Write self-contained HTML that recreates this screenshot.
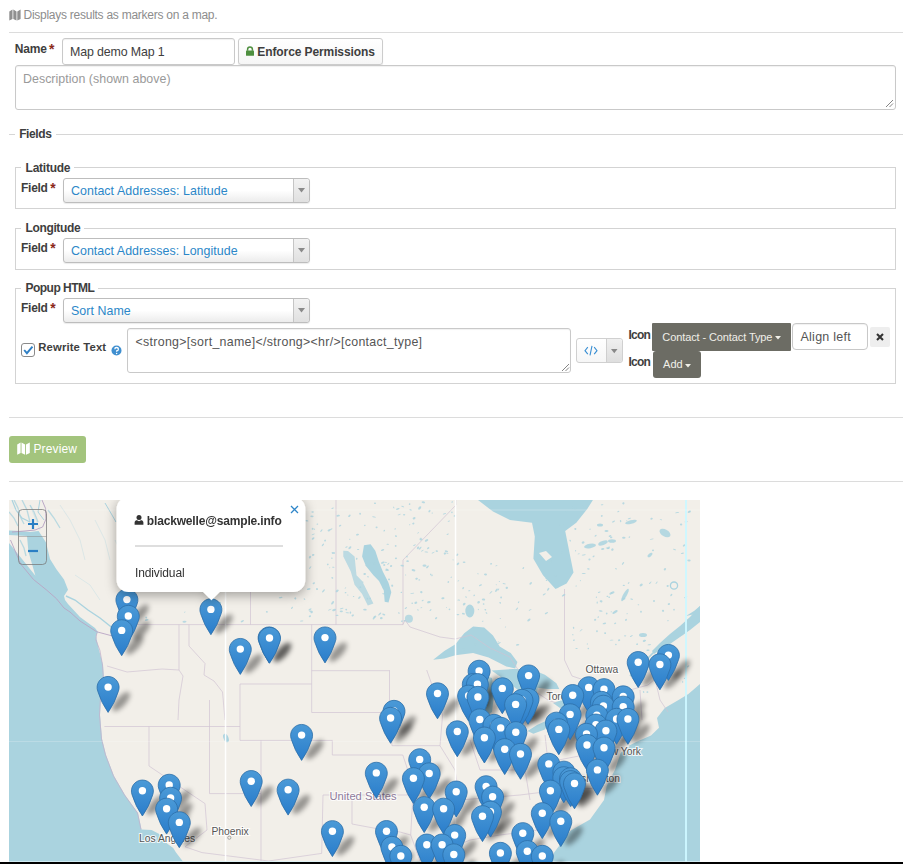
<!DOCTYPE html>
<html><head><meta charset="utf-8"><style>
html,body{margin:0;padding:0;background:#fff;width:903px;height:864px;overflow:hidden;position:relative}
body{font-family:"Liberation Sans", sans-serif}
.abs{position:absolute}
.t{position:absolute;white-space:pre;line-height:1;font-family:"Liberation Sans", sans-serif}
.hr{position:absolute;left:9px;width:894px;height:1px;background:#dcdcdc}
.line{position:absolute;height:1px;background:#d6d6d6}
.inp{position:absolute;border:1px solid #c9c9c9;border-radius:3px;background:#fff;box-shadow:inset 0 1px 1px rgba(0,0,0,0.06)}
.btn{position:absolute;border:1px solid #cccccc;border-radius:3px;background:linear-gradient(#ffffff,#f6f6f6);box-shadow:0 1px 1px rgba(0,0,0,0.1)}
.fs{position:absolute;border:1px solid #d3d3d3}
.sel{position:absolute;border:1px solid #bdbdbd;border-radius:3px;background:linear-gradient(#ffffff 50%,#ececec);box-shadow:0 1px 1px rgba(0,0,0,0.08)}
.arr{position:absolute;right:0;top:0;width:15px;height:23px;border-left:1px solid #c5c5c5;background:linear-gradient(#f2f2f2,#e0e0e0);border-radius:0 3px 3px 0}
.dbtn{position:absolute;background:#6c6c64;border-radius:2px}
</style></head><body>
<svg class="abs" style="left:9px;top:9px" width="12" height="12" viewBox="0 0 12 12"><path d="M0.3 2.4 L3.5 0.6 L3.5 9.9 L0.3 11.6 Z M4.3 0.6 L7.5 2.4 L7.5 11.6 L4.3 9.9 Z M8.3 2.4 L11.6 0.6 L11.6 9.9 L8.3 11.6 Z" fill="#8f8f8f"/></svg>
<div class="t" style="left:23.5px;top:9px;font-size:12px;font-weight:normal;color:#8d8d8d;letter-spacing:-0.260px;">Displays results as markers on a map.</div>
<div class="hr" style="top:32px"></div>
<div class="t" style="left:14.8px;top:43px;font-size:12px;font-weight:bold;color:#3e3e3e;letter-spacing:-0.222px;">Name</div>
<div class="t" style="left:49px;top:42px;font-size:14px;font-weight:bold;color:#8b2a1a;">*</div>
<div class="inp" style="left:62px;top:38px;width:171px;height:25px"></div>
<div class="t" style="left:70px;top:46px;font-size:12.4px;font-weight:normal;color:#3e3e3e;letter-spacing:-0.137px;">Map demo Map 1</div>
<div class="btn" style="left:238px;top:38px;width:143px;height:25px"></div>
<svg class="abs" style="left:245px;top:46px" width="10" height="10" viewBox="0 0 10 10"><path d="M2.6 4.8 V3.3 A2.4 2.4 0 0 1 7.4 3.3 V4.8" fill="none" stroke="#4e8f3f" stroke-width="1.5"/><rect x="1" y="4.6" width="8" height="5.2" rx="0.6" fill="#4e8f3f"/></svg>
<div class="t" style="left:257.3px;top:46px;font-size:12px;font-weight:bold;color:#3e3e3e;letter-spacing:-0.100px;">Enforce Permissions</div>
<div class="inp" style="left:15px;top:65px;width:879px;height:43px"></div>
<div class="t" style="left:23px;top:73px;font-size:12.4px;font-weight:normal;color:#9a9a9a;letter-spacing:0.036px;">Description (shown above)</div>
<svg class="abs" style="left:885px;top:99px" width="9" height="9" viewBox="0 0 9 9"><path d="M1 8 L8 1 M4.5 8 L8 4.5" stroke="#777" stroke-width="0.9"/></svg>
<div class="line" style="left:9px;top:134px;width:6px"></div>
<div class="line" style="left:56px;top:134px;width:847px"></div>
<div class="t" style="left:19.2px;top:128px;font-size:12px;font-weight:bold;color:#3e3e3e;letter-spacing:-0.398px;">Fields</div>
<div class="fs" style="left:15px;top:167px;width:879px;height:40px"></div><div class="abs" style="left:21px;top:165px;width:53px;height:5px;background:#fff"></div>
<div class="t" style="left:25.6px;top:162px;font-size:12px;font-weight:bold;color:#3e3e3e;letter-spacing:-0.259px;">Latitude</div>
<div class="t" style="left:21px;top:182px;font-size:12px;font-weight:bold;color:#3e3e3e;letter-spacing:-0.263px;">Field</div><div class="t" style="left:50.3px;top:181px;font-size:14px;font-weight:bold;color:#8b2a1a;">*</div>
<div class="sel" style="left:63px;top:178px;width:245px;height:23px"><div class="arr"></div></div><svg class="abs" style="left:298px;top:188px" width="7" height="5" viewBox="0 0 7 5"><path d="M0 0 H7 L3.5 4.5 Z" fill="#8a8a8a"/></svg><div class="t" style="left:71px;top:185px;font-size:12.4px;font-weight:normal;color:#2b87c8;letter-spacing:0.060px;">Contact Addresses: Latitude</div>
<div class="fs" style="left:15px;top:228px;width:879px;height:40px"></div><div class="abs" style="left:21px;top:226px;width:63px;height:5px;background:#fff"></div>
<div class="t" style="left:25.6px;top:222px;font-size:12px;font-weight:bold;color:#3e3e3e;letter-spacing:-0.376px;">Longitude</div>
<div class="t" style="left:21px;top:242px;font-size:12px;font-weight:bold;color:#3e3e3e;letter-spacing:-0.263px;">Field</div><div class="t" style="left:50.3px;top:241px;font-size:14px;font-weight:bold;color:#8b2a1a;">*</div>
<div class="sel" style="left:63px;top:238px;width:245px;height:23px"><div class="arr"></div></div><svg class="abs" style="left:298px;top:248px" width="7" height="5" viewBox="0 0 7 5"><path d="M0 0 H7 L3.5 4.5 Z" fill="#8a8a8a"/></svg><div class="t" style="left:71px;top:245px;font-size:12.4px;font-weight:normal;color:#2b87c8;letter-spacing:0.045px;">Contact Addresses: Longitude</div>
<div class="fs" style="left:15px;top:288px;width:879px;height:94px"></div><div class="abs" style="left:21px;top:286px;width:77px;height:5px;background:#fff"></div>
<div class="t" style="left:25.4px;top:282px;font-size:12px;font-weight:bold;color:#3e3e3e;letter-spacing:-0.498px;">Popup HTML</div>
<div class="t" style="left:21px;top:302px;font-size:12px;font-weight:bold;color:#3e3e3e;letter-spacing:-0.263px;">Field</div><div class="t" style="left:50.3px;top:301px;font-size:14px;font-weight:bold;color:#8b2a1a;">*</div>
<div class="sel" style="left:63px;top:298px;width:245px;height:23px"><div class="arr"></div></div><svg class="abs" style="left:298px;top:308px" width="7" height="5" viewBox="0 0 7 5"><path d="M0 0 H7 L3.5 4.5 Z" fill="#8a8a8a"/></svg><div class="t" style="left:71px;top:305px;font-size:12.4px;font-weight:normal;color:#2b87c8;letter-spacing:0.065px;">Sort Name</div>
<div class="abs" style="left:21px;top:343px;width:12px;height:12px;border:1px solid #8a8a8a;border-radius:3px;background:#fff"></div>
<svg class="abs" style="left:22px;top:344px" width="12" height="12" viewBox="0 0 12 12"><path d="M2.2 6 L4.9 9.2 L10.5 2.6" fill="none" stroke="#2f7fc4" stroke-width="1.9"/></svg>
<div class="t" style="left:38.3px;top:342px;font-size:11.3px;font-weight:bold;color:#3e3e3e;letter-spacing:0.130px;">Rewrite Text</div>
<svg class="abs" style="left:111px;top:345px" width="11" height="11" viewBox="0 0 11 11"><circle cx="5.5" cy="5.5" r="5" fill="#3f8fd0"/><path d="M3.8 4.2 A1.8 1.7 0 1 1 5.7 5.9 V6.8" fill="none" stroke="#fff" stroke-width="1.3"/><circle cx="5.6" cy="8.5" r="0.75" fill="#fff"/></svg>
<div class="inp" style="left:127px;top:328px;width:442px;height:43px"></div>
<div class="t" style="left:135.5px;top:336px;font-size:12.4px;font-weight:normal;color:#555;letter-spacing:0.299px;">&lt;strong&gt;[sort_name]&lt;/strong&gt;&lt;hr/&gt;[contact_type]</div>
<svg class="abs" style="left:561px;top:363px" width="9" height="9" viewBox="0 0 9 9"><path d="M1 8 L8 1 M4.5 8 L8 4.5" stroke="#777" stroke-width="0.9"/></svg>
<div class="btn" style="left:576px;top:338px;width:45px;height:23px;border-color:#d0d0d0;box-shadow:none"></div>
<div class="abs" style="left:606px;top:339px;width:15px;height:23px;border-left:1px solid #cfcfcf;background:linear-gradient(#f0f0f0,#dedede);border-radius:0 3px 3px 0"></div>
<svg class="abs" style="left:584px;top:345px" width="14" height="11" viewBox="0 0 14 11"><path d="M3.8 2.2 L1 5.7 L3.8 9.2 M10.2 2.2 L13 5.7 L10.2 9.2 M8 0.8 L6 10.4" fill="none" stroke="#3a8fd3" stroke-width="1.1"/></svg>
<svg class="abs" style="left:611px;top:349px" width="7" height="5" viewBox="0 0 7 5"><path d="M0 0 H6.5 L3.25 4.2 Z" fill="#888"/></svg>
<div class="t" style="left:628.5px;top:329px;font-size:12px;font-weight:bold;color:#3e3e3e;letter-spacing:-0.743px;">Icon</div>
<div class="t" style="left:628.5px;top:356px;font-size:12px;font-weight:bold;color:#3e3e3e;letter-spacing:-0.743px;">Icon</div>
<div class="dbtn" style="left:652px;top:323px;width:139px;height:28px;border-radius:1px"></div>
<div class="t" style="left:662.3px;top:332px;font-size:11px;font-weight:normal;color:#f0efe8;letter-spacing:-0.101px;">Contact - Contact Type</div>
<svg class="abs" style="left:775px;top:336px" width="6" height="4" viewBox="0 0 6 4"><path d="M0 0 H6 L3 3.5 Z" fill="#f0efe8"/></svg>
<div class="inp" style="left:792px;top:323px;width:74px;height:25px;border-color:#c8c8c8;border-radius:4px"></div>
<div class="t" style="left:800.5px;top:331px;font-size:12.5px;font-weight:normal;color:#555;letter-spacing:0.255px;">Align left</div>
<div class="abs" style="left:870px;top:327px;width:20px;height:20px;background:#eeeeee;border-radius:2px"></div>
<svg class="abs" style="left:876px;top:333px" width="8" height="8" viewBox="0 0 8 8"><path d="M1 1 L7 7 M7 1 L1 7" stroke="#333" stroke-width="2.1"/></svg>
<div class="dbtn" style="left:653px;top:351px;width:48px;height:27px;border-radius:3px"></div>
<div class="t" style="left:663px;top:359px;font-size:11px;font-weight:normal;color:#f0efe8;letter-spacing:0.041px;">Add</div>
<svg class="abs" style="left:685px;top:364px" width="6" height="4" viewBox="0 0 6 4"><path d="M0 0 H6 L3 3.5 Z" fill="#f0efe8"/></svg>
<div class="hr" style="top:417px"></div>
<div class="abs" style="left:9px;top:436px;width:77px;height:27px;background:#a3c47d;border-radius:3px"></div>
<svg class="abs" style="left:17px;top:442px" width="13" height="13" viewBox="0 0 13 13"><path d="M0.2 2.4 L3.6 0.5 L3.6 10.9 L0.2 12.7 Z M4.5 0.5 L8.1 2.4 L8.1 12.7 L4.5 10.9 Z M9 2.4 L12.8 0.5 L12.8 10.9 L9 12.7 Z" fill="#fff"/></svg>
<div class="t" style="left:33.4px;top:443px;font-size:12px;font-weight:normal;color:#fff;letter-spacing:0.145px;">Preview</div>
<div class="hr" style="top:481px"></div>
<svg class="abs" style="left:0;top:0" width="903" height="864" viewBox="0 0 903 864">
<defs>
<clipPath id="mapclip"><rect x="9" y="500" width="691" height="362"/></clipPath>
<linearGradient id="pg" x1="0" y1="0" x2="0" y2="1"><stop offset="0" stop-color="#4b9ad7"/><stop offset="1" stop-color="#2a7dcb"/></linearGradient>
<filter id="blur" x="-20%" y="-20%" width="140%" height="140%"><feGaussianBlur stdDeviation="2.6"/></filter>
<filter id="pshadow" x="-10%" y="-10%" width="120%" height="130%"><feDropShadow dx="0" dy="3" stdDeviation="6" flood-opacity="0.35"/></filter>
<g id="pin"><path d="M0,25.3 Q-6.8,15.8 -10.3,4.2 A11,11 0 1 1 10.3,4.2 Q6.8,15.8 0,25.3 Z" fill="url(#pg)" stroke="#2c6fa8" stroke-width="0.8" stroke-linejoin="round"/>
<circle cx="0" cy="0" r="3.7" fill="#fff"/></g>
</defs>
<g clip-path="url(#mapclip)">
<rect x="9" y="500" width="691" height="362" fill="#f2efe9"/>
<path d="M9.0,530.5 L20.0,531.0 L30.0,532.0 L38.6,531.0 L46.0,542.6 L50.0,559.0 L56.4,569.3 L64.0,579.5 L68.0,589.7 L64.0,596.0 L65.0,600.0 L68.0,604.0 L80.0,617.0 L95.0,628.0 L98.0,632.0 L96.0,636.0 L99.0,650.0 L103.0,665.0 L104.0,680.0 L101.0,697.0 L100.0,715.0 L102.0,739.0 L106.0,755.0 L114.0,776.0 L125.0,795.0 L138.0,813.0 L141.5,829.4 L151.6,830.0 L158.8,833.7 L167.4,843.8 L173.2,848.0 L176.0,852.4 L183.3,862.0 L9.0,862.0 Z" fill="#aad3df" />
<path d="M9.0,535.0 L27.0,536.0 L28.4,551.5 L35.4,575.7 L22.0,559.0 L9.0,543.0 Z" fill="#f2efe9" />
<path d="M66.0,596.0 L75.0,600.0 L88.0,610.0 L100.0,618.0 L110.0,626.0 L118.0,633.0" fill="none" stroke="#aad3df" stroke-width="1.4" />
<path d="M10.5,540.0 L20.7,564.0 L33.5,579.5 L46.2,589.7 L56.4,598.6 L64.0,608.0 L70.0,612.0 L80.0,621.0 L96.8,631.8 L111.8,635.8" fill="none" stroke="#b9a5c4" stroke-width="0.9" />
<path d="M96.8,632.8 L95.8,639.8 L99.8,650.0 L102.5,665.0 L103.5,680.0 L100.5,697.0 L99.5,715.0 L101.5,739.0 L105.5,755.0 L113.5,776.0 L124.5,795.0 L137.5,813.0 L141.0,829.4" fill="none" stroke="#c3b3cc" stroke-width="0.8" />
<path d="M12.0,532.0 L25.0,531.0 L35.0,530.0 L42.6,527.0 L46.0,519.0 L45.6,508.6 L42.0,500.0" fill="none" stroke="#bba8c6" stroke-width="1.0" />
<path d="M14.0,500.0 L18.0,508.0 L20.0,516.0 L24.0,524.0" fill="none" stroke="#aad3df" stroke-width="1.3" opacity="0.8"/>
<path d="M22.0,500.0 L27.0,510.0 L30.0,522.0" fill="none" stroke="#aad3df" stroke-width="1.3" opacity="0.8"/>
<path d="M30.0,505.0 L34.0,512.0 L38.0,522.0" fill="none" stroke="#aad3df" stroke-width="1.3" opacity="0.8"/>
<path d="M9.0,512.0 L14.0,518.0 L18.0,526.0" fill="none" stroke="#aad3df" stroke-width="1.3" opacity="0.8"/>
<path d="M48.0,510.0 L54.0,518.0 L60.0,528.0" fill="none" stroke="#aad3df" stroke-width="1.3" opacity="0.8"/>
<path d="M20.0,540.0 L24.0,548.0 L26.0,556.0" fill="none" stroke="#aad3df" stroke-width="1.3" opacity="0.8"/>
<path d="M12.0,500.0 L16.0,510.0 L22.0,518.0 L30.0,522.0" fill="none" stroke="#aad3df" stroke-width="1.2" />
<path d="M40.0,500.0 L38.0,512.0 L44.0,520.0" fill="none" stroke="#aad3df" stroke-width="1" />
<path d="M105.0,503.0 L112.0,515.0 L116.0,522.0" fill="none" stroke="#aad3df" stroke-width="1" />
<path d="M478.0,500.0 L493.0,511.6 L510.0,520.0 L532.0,522.7 L534.8,536.5 L533.4,558.7 L543.0,575.3 L555.5,589.0 L566.6,583.6 L573.5,572.5 L570.7,558.7 L565.2,531.0 L576.3,522.7 L587.4,508.8 L592.9,500.0 Z" fill="#aad3df" />
<path d="M539.0,553.0 L546.0,551.0 L552.0,557.0 L546.0,561.0 Z" fill="#f2efe9" />
<path d="M364.0,545.2 L370.6,544.2 L375.3,550.8 L379.0,562.0 L382.8,571.5 L388.5,582.8 L391.3,592.2 L388.5,602.6 L384.7,601.7 L383.8,590.4 L379.0,581.0 L373.4,575.3 L365.9,565.9 L362.1,556.5 Z" fill="#aad3df" />
<path d="M343.3,550.8 L348.0,551.0 L354.6,556.5 L356.5,575.3 L362.1,581.0 L367.8,592.2 L373.4,603.5 L367.8,605.4 L362.1,594.0 L354.6,584.7 L350.8,571.5 L343.3,556.5 Z" fill="#aad3df" opacity="0.75"/>
<path d="M433.2,659.7 L444.3,650.9 L455.4,644.2 L464.2,633.2 L473.1,626.5 L484.2,627.6 L493.0,635.4 L499.7,646.4 L510.7,653.1 L517.4,662.0 L515.2,668.6 L506.3,666.4 L497.5,662.0 L488.6,657.5 L473.1,653.1 L455.4,655.3 L444.3,658.6 Z" fill="#aad3df" />
<ellipse cx="469.8" cy="611" rx="4.5" ry="6.5" fill="#aad3df" opacity="0.9"/>
<ellipse cx="408.9" cy="618.8" rx="4" ry="4" fill="#aad3df" opacity="0.8"/>
<path d="M491.6,670.4 L513.2,669.0 L530.5,669.0 L544.9,674.7 L556.4,683.3 L559.3,689.1 L547.7,689.1 L537.7,687.7 L534.8,706.4 L524.7,700.6 L518.0,690.0 L505.0,680.0 Z" fill="#aad3df" />
<path d="M486.0,676.0 L492.0,678.0 L494.0,695.0 L492.0,712.0 L486.0,716.0 L484.0,700.0 Z" fill="#aad3df" />
<path d="M527.6,730.9 L537.0,725.0 L546.3,720.8 L548.0,724.0 L544.9,729.4 L533.3,733.7 Z" fill="#aad3df" />
<path d="M553.0,703.0 L565.0,699.0 L578.0,700.0 L576.0,705.0 L560.0,708.0 Z" fill="#aad3df" />
<path d="M652.0,651.0 L660.0,643.0 L670.0,634.0 L680.0,626.0 L690.0,617.0 L700.0,606.0 L700.0,622.0 L690.0,630.0 L680.0,637.0 L670.0,644.0 L660.0,650.0 L654.0,654.0 Z" fill="#aad3df" />
<path d="M700.0,606.0 L694.0,611.0 L686.0,616.0 L700.0,613.0 Z" fill="#aad3df" />
<path d="M655.0,651.0 L648.0,658.0 L640.0,666.0 L630.0,676.0" fill="none" stroke="#aad3df" stroke-width="1.6" />
<path d="M700.0,684.0 L688.4,694.0 L678.5,700.0 L664.8,708.0 L657.0,718.0 L659.0,727.7 L651.0,735.6 L637.2,741.5 L629.3,745.4 L620.6,753.0 L615.0,769.7 L606.7,786.0 L604.0,800.0 L590.0,819.5 L570.7,830.6 L562.4,841.6 L554.0,852.7 L551.4,862.0 L700.0,862.0 Z" fill="#aad3df" />
<path d="M136.0,624.6 L403.0,624.6 L405.0,620.0 L410.0,627.0 L422.0,631.0 L440.0,637.0 L455.0,639.0 L471.0,635.0 L490.0,648.0 L510.0,657.0 L515.0,665.0 L530.0,688.0 L548.0,700.0 L556.0,703.0" fill="none" stroke="#cfc2d2" stroke-width="0.8" stroke-linejoin="round" stroke-opacity="0.85"/>
<path d="M403.0,624.6 L403.0,560.0 L456.0,505.0 L456.0,500.0" fill="none" stroke="#cfc2d2" stroke-width="0.8" stroke-linejoin="round" stroke-opacity="0.85"/>
<path d="M564.5,589.0 L564.5,660.0 L572.0,676.0 L590.0,682.0 L605.0,690.0 L612.0,692.0 L630.0,690.0 L648.0,685.0 L655.0,679.0" fill="none" stroke="#cfc2d2" stroke-width="0.8" stroke-linejoin="round" stroke-opacity="0.85"/>
<path d="M250.5,590.0 L250.5,624.6" fill="none" stroke="#cfc2d2" stroke-width="0.8" stroke-linejoin="round" stroke-opacity="0.85"/>
<path d="M336.0,500.0 L336.0,624.6" fill="none" stroke="#cfc2d2" stroke-width="0.8" stroke-linejoin="round" stroke-opacity="0.85"/>
<path d="M132.0,500.0 L138.0,520.0 L150.0,540.0" fill="none" stroke="#cfc2d2" stroke-width="0.8" stroke-linejoin="round" stroke-opacity="0.85"/>
<path d="M179.0,624.6 L179.0,670.0 L183.0,676.0 L179.0,700.0 L178.0,720.0" fill="none" stroke="#cfc2d2" stroke-width="0.8" stroke-linejoin="round" stroke-opacity="0.85"/>
<path d="M107.0,666.0 L127.0,672.0 L162.0,669.0 L179.0,670.0" fill="none" stroke="#cfc2d2" stroke-width="0.8" stroke-linejoin="round" stroke-opacity="0.85"/>
<path d="M189.0,624.6 L189.0,646.0 L205.0,663.5 L204.0,675.0 L214.0,681.0 L222.5,692.0 L225.0,720.0" fill="none" stroke="#cfc2d2" stroke-width="0.8" stroke-linejoin="round" stroke-opacity="0.85"/>
<path d="M311.7,624.6 L311.7,712.5" fill="none" stroke="#cfc2d2" stroke-width="0.8" stroke-linejoin="round" stroke-opacity="0.85"/>
<path d="M311.7,670.7 L389.0,670.7" fill="none" stroke="#cfc2d2" stroke-width="0.8" stroke-linejoin="round" stroke-opacity="0.85"/>
<path d="M240.0,684.0 L311.7,684.0" fill="none" stroke="#cfc2d2" stroke-width="0.8" stroke-linejoin="round" stroke-opacity="0.85"/>
<path d="M240.0,684.0 L240.0,740.4" fill="none" stroke="#cfc2d2" stroke-width="0.8" stroke-linejoin="round" stroke-opacity="0.85"/>
<path d="M311.7,712.5 L389.5,712.5" fill="none" stroke="#cfc2d2" stroke-width="0.8" stroke-linejoin="round" stroke-opacity="0.85"/>
<path d="M389.5,670.0 L389.5,712.5 L392.0,745.7 L440.0,745.7" fill="none" stroke="#cfc2d2" stroke-width="0.8" stroke-linejoin="round" stroke-opacity="0.85"/>
<path d="M104.4,726.5 L240.0,726.5" fill="none" stroke="#cfc2d2" stroke-width="0.8" stroke-linejoin="round" stroke-opacity="0.85"/>
<path d="M149.0,726.5 L149.0,766.0 L205.0,803.6 L207.0,830.0 L185.0,846.8" fill="none" stroke="#cfc2d2" stroke-width="0.8" stroke-linejoin="round" stroke-opacity="0.85"/>
<path d="M209.5,700.0 L209.5,793.6 L261.0,793.6" fill="none" stroke="#cfc2d2" stroke-width="0.8" stroke-linejoin="round" stroke-opacity="0.85"/>
<path d="M261.0,740.4 L261.0,861.0" fill="none" stroke="#cfc2d2" stroke-width="0.8" stroke-linejoin="round" stroke-opacity="0.85"/>
<path d="M240.0,740.4 L332.3,740.4" fill="none" stroke="#cfc2d2" stroke-width="0.8" stroke-linejoin="round" stroke-opacity="0.85"/>
<path d="M332.3,740.4 L332.3,755.0 L402.8,755.0 L413.4,787.0 L410.7,835.0 L420.0,861.0" fill="none" stroke="#cfc2d2" stroke-width="0.8" stroke-linejoin="round" stroke-opacity="0.85"/>
<path d="M323.0,795.0 L408.0,795.0" fill="none" stroke="#cfc2d2" stroke-width="0.8" stroke-linejoin="round" stroke-opacity="0.85"/>
<path d="M323.0,795.0 L321.7,853.4 L268.5,861.0" fill="none" stroke="#cfc2d2" stroke-width="0.8" stroke-linejoin="round" stroke-opacity="0.85"/>
<path d="M185.0,846.8 L202.0,852.6 L268.5,861.0" fill="none" stroke="#cfc2d2" stroke-width="0.8" stroke-linejoin="round" stroke-opacity="0.85"/>
<path d="M352.0,800.0 L352.0,824.0 L381.5,829.5 L400.0,832.0 L410.7,835.0" fill="none" stroke="#cfc2d2" stroke-width="0.8" stroke-linejoin="round" stroke-opacity="0.85"/>
<path d="M426.7,670.0 L442.6,715.0 L440.0,745.7 L455.0,770.0 L460.0,800.0" fill="none" stroke="#cfc2d2" stroke-width="0.8" stroke-linejoin="round" stroke-opacity="0.85"/>
<path d="M460.0,800.0 L520.0,795.0 L560.0,790.0 L600.0,788.0" fill="none" stroke="#cfc2d2" stroke-width="0.8" stroke-linejoin="round" stroke-opacity="0.85"/>
<path d="M470.0,740.0 L480.0,770.0 L520.0,770.0" fill="none" stroke="#cfc2d2" stroke-width="0.8" stroke-linejoin="round" stroke-opacity="0.85"/>
<path d="M520.0,740.0 L525.0,770.0 L530.0,800.0" fill="none" stroke="#cfc2d2" stroke-width="0.8" stroke-linejoin="round" stroke-opacity="0.85"/>
<path d="M545.0,735.0 L548.0,762.0 L600.0,752.0" fill="none" stroke="#cfc2d2" stroke-width="0.8" stroke-linejoin="round" stroke-opacity="0.85"/>
<path d="M420.0,861.0 L470.0,840.0 L500.0,835.0 L540.0,830.0" fill="none" stroke="#cfc2d2" stroke-width="0.8" stroke-linejoin="round" stroke-opacity="0.85"/>
<path d="M655.0,679.0 L660.0,700.0 L668.0,712.0" fill="none" stroke="#cfc2d2" stroke-width="0.8" stroke-linejoin="round" stroke-opacity="0.85"/>
<path d="M640.0,690.0 L642.0,720.0" fill="none" stroke="#cfc2d2" stroke-width="0.8" stroke-linejoin="round" stroke-opacity="0.85"/>
<ellipse cx="212.4" cy="569.2" rx="1.9" ry="0.7" transform="rotate(-19 212.4 569.2)" fill="#aad3df" opacity="0.8"/>
<ellipse cx="234.0" cy="524.2" rx="1.3" ry="0.8" transform="rotate(3 234.0 524.2)" fill="#aad3df" opacity="0.8"/>
<ellipse cx="155.1" cy="538.4" rx="0.6" ry="1.0" transform="rotate(-5 155.1 538.4)" fill="#aad3df" opacity="0.8"/>
<ellipse cx="146.7" cy="619.9" rx="1.9" ry="0.9" transform="rotate(-11 146.7 619.9)" fill="#aad3df" opacity="0.8"/>
<ellipse cx="165.2" cy="503.8" rx="1.3" ry="0.4" transform="rotate(-45 165.2 503.8)" fill="#aad3df" opacity="0.8"/>
<ellipse cx="178.7" cy="505.6" rx="1.2" ry="0.7" transform="rotate(7 178.7 505.6)" fill="#aad3df" opacity="0.8"/>
<ellipse cx="223.1" cy="578.8" rx="1.2" ry="0.9" transform="rotate(-23 223.1 578.8)" fill="#aad3df" opacity="0.8"/>
<ellipse cx="184.5" cy="621.7" rx="2.0" ry="1.0" transform="rotate(-3 184.5 621.7)" fill="#aad3df" opacity="0.8"/>
<ellipse cx="190.4" cy="529.6" rx="0.9" ry="0.4" transform="rotate(1 190.4 529.6)" fill="#aad3df" opacity="0.8"/>
<ellipse cx="204.1" cy="603.6" rx="1.1" ry="1.1" transform="rotate(8 204.1 603.6)" fill="#aad3df" opacity="0.8"/>
<ellipse cx="140.1" cy="527.2" rx="1.9" ry="0.7" transform="rotate(18 140.1 527.2)" fill="#aad3df" opacity="0.8"/>
<ellipse cx="203.6" cy="510.8" rx="1.4" ry="0.9" transform="rotate(-38 203.6 510.8)" fill="#aad3df" opacity="0.8"/>
<ellipse cx="153.9" cy="541.9" rx="1.9" ry="0.9" transform="rotate(-51 153.9 541.9)" fill="#aad3df" opacity="0.8"/>
<ellipse cx="179.4" cy="514.1" rx="0.6" ry="1.0" transform="rotate(-46 179.4 514.1)" fill="#aad3df" opacity="0.8"/>
<ellipse cx="229.5" cy="555.7" rx="0.8" ry="0.9" transform="rotate(-50 229.5 555.7)" fill="#aad3df" opacity="0.8"/>
<ellipse cx="243.0" cy="516.0" rx="1.1" ry="0.5" transform="rotate(-38 243.0 516.0)" fill="#aad3df" opacity="0.8"/>
<ellipse cx="295.3" cy="598.4" rx="1.0" ry="1.0" transform="rotate(-43 295.3 598.4)" fill="#aad3df" opacity="0.8"/>
<ellipse cx="203.1" cy="604.5" rx="1.5" ry="0.5" transform="rotate(19 203.1 604.5)" fill="#aad3df" opacity="0.8"/>
<ellipse cx="174.1" cy="533.0" rx="1.7" ry="0.6" transform="rotate(-36 174.1 533.0)" fill="#aad3df" opacity="0.8"/>
<ellipse cx="151.7" cy="512.8" rx="1.4" ry="0.6" transform="rotate(-12 151.7 512.8)" fill="#aad3df" opacity="0.8"/>
<ellipse cx="199.5" cy="556.4" rx="1.9" ry="0.7" transform="rotate(-14 199.5 556.4)" fill="#aad3df" opacity="0.8"/>
<ellipse cx="278.6" cy="523.9" rx="0.7" ry="1.0" transform="rotate(5 278.6 523.9)" fill="#aad3df" opacity="0.8"/>
<ellipse cx="179.9" cy="524.8" rx="1.6" ry="1.1" transform="rotate(-44 179.9 524.8)" fill="#aad3df" opacity="0.8"/>
<ellipse cx="292.0" cy="607.9" rx="1.4" ry="0.7" transform="rotate(-52 292.0 607.9)" fill="#aad3df" opacity="0.8"/>
<ellipse cx="146.2" cy="617.5" rx="0.9" ry="0.9" transform="rotate(-39 146.2 617.5)" fill="#aad3df" opacity="0.8"/>
<ellipse cx="271.8" cy="573.6" rx="0.9" ry="0.5" transform="rotate(-2 271.8 573.6)" fill="#aad3df" opacity="0.8"/>
<ellipse cx="151.0" cy="529.4" rx="1.3" ry="1.0" transform="rotate(-11 151.0 529.4)" fill="#aad3df" opacity="0.8"/>
<ellipse cx="184.8" cy="612.1" rx="0.8" ry="0.4" transform="rotate(-38 184.8 612.1)" fill="#aad3df" opacity="0.8"/>
<ellipse cx="211.3" cy="509.3" rx="0.8" ry="0.7" transform="rotate(-14 211.3 509.3)" fill="#aad3df" opacity="0.8"/>
<ellipse cx="161.1" cy="545.5" rx="1.8" ry="1.1" transform="rotate(-7 161.1 545.5)" fill="#aad3df" opacity="0.8"/>
<ellipse cx="250.6" cy="572.1" rx="0.7" ry="0.4" transform="rotate(-59 250.6 572.1)" fill="#aad3df" opacity="0.8"/>
<ellipse cx="285.6" cy="586.1" rx="1.9" ry="0.4" transform="rotate(-9 285.6 586.1)" fill="#aad3df" opacity="0.8"/>
<ellipse cx="217.2" cy="589.7" rx="1.0" ry="1.1" transform="rotate(-54 217.2 589.7)" fill="#aad3df" opacity="0.8"/>
<ellipse cx="227.4" cy="590.4" rx="1.9" ry="0.9" transform="rotate(-4 227.4 590.4)" fill="#aad3df" opacity="0.8"/>
<ellipse cx="266.9" cy="611.8" rx="1.0" ry="0.9" transform="rotate(12 266.9 611.8)" fill="#aad3df" opacity="0.8"/>
<ellipse cx="279.4" cy="552.1" rx="1.7" ry="1.0" transform="rotate(-14 279.4 552.1)" fill="#aad3df" opacity="0.8"/>
<ellipse cx="240.0" cy="547.9" rx="1.4" ry="0.8" transform="rotate(-54 240.0 547.9)" fill="#aad3df" opacity="0.8"/>
<ellipse cx="242.3" cy="621.2" rx="1.8" ry="0.9" transform="rotate(-29 242.3 621.2)" fill="#aad3df" opacity="0.8"/>
<ellipse cx="257.6" cy="571.7" rx="1.2" ry="1.0" transform="rotate(-53 257.6 571.7)" fill="#aad3df" opacity="0.8"/>
<ellipse cx="260.0" cy="505.6" rx="1.4" ry="0.7" transform="rotate(-42 260.0 505.6)" fill="#aad3df" opacity="0.8"/>
<ellipse cx="251.7" cy="561.7" rx="1.4" ry="1.0" transform="rotate(-40 251.7 561.7)" fill="#aad3df" opacity="0.8"/>
<ellipse cx="141.8" cy="538.1" rx="1.5" ry="0.5" transform="rotate(-46 141.8 538.1)" fill="#aad3df" opacity="0.8"/>
<ellipse cx="284.9" cy="581.2" rx="1.2" ry="1.0" transform="rotate(-34 284.9 581.2)" fill="#aad3df" opacity="0.8"/>
<ellipse cx="246.5" cy="525.8" rx="1.1" ry="1.0" transform="rotate(13 246.5 525.8)" fill="#aad3df" opacity="0.8"/>
<ellipse cx="280.8" cy="548.1" rx="1.4" ry="0.6" transform="rotate(-49 280.8 548.1)" fill="#aad3df" opacity="0.8"/>
<ellipse cx="219.4" cy="602.5" rx="1.8" ry="0.9" transform="rotate(16 219.4 602.5)" fill="#aad3df" opacity="0.8"/>
<ellipse cx="184.3" cy="522.3" rx="1.2" ry="0.6" transform="rotate(-43 184.3 522.3)" fill="#aad3df" opacity="0.8"/>
<ellipse cx="206.2" cy="577.1" rx="1.2" ry="0.6" transform="rotate(7 206.2 577.1)" fill="#aad3df" opacity="0.8"/>
<ellipse cx="297.1" cy="556.3" rx="0.6" ry="0.4" transform="rotate(10 297.1 556.3)" fill="#aad3df" opacity="0.8"/>
<ellipse cx="146.6" cy="587.0" rx="1.4" ry="0.6" transform="rotate(3 146.6 587.0)" fill="#aad3df" opacity="0.8"/>
<ellipse cx="143.1" cy="518.3" rx="1.2" ry="0.4" transform="rotate(6 143.1 518.3)" fill="#aad3df" opacity="0.8"/>
<ellipse cx="178.0" cy="518.9" rx="0.6" ry="0.8" transform="rotate(-24 178.0 518.9)" fill="#aad3df" opacity="0.8"/>
<ellipse cx="240.8" cy="580.6" rx="1.7" ry="1.1" transform="rotate(-5 240.8 580.6)" fill="#aad3df" opacity="0.8"/>
<ellipse cx="171.9" cy="559.0" rx="0.8" ry="0.4" transform="rotate(-22 171.9 559.0)" fill="#aad3df" opacity="0.8"/>
<ellipse cx="254.3" cy="523.5" rx="0.9" ry="0.6" transform="rotate(-4 254.3 523.5)" fill="#aad3df" opacity="0.8"/>
<ellipse cx="223.3" cy="575.7" rx="1.6" ry="0.7" transform="rotate(3 223.3 575.7)" fill="#aad3df" opacity="0.8"/>
<ellipse cx="285.0" cy="512.5" rx="1.9" ry="0.9" transform="rotate(-50 285.0 512.5)" fill="#aad3df" opacity="0.8"/>
<ellipse cx="212.6" cy="577.1" rx="1.9" ry="0.7" transform="rotate(-14 212.6 577.1)" fill="#aad3df" opacity="0.8"/>
<ellipse cx="280.7" cy="597.6" rx="1.9" ry="0.7" transform="rotate(-8 280.7 597.6)" fill="#aad3df" opacity="0.8"/>
<ellipse cx="172.8" cy="588.6" rx="1.7" ry="0.8" transform="rotate(-3 172.8 588.6)" fill="#aad3df" opacity="0.8"/>
<ellipse cx="334.1" cy="610.0" rx="2.0" ry="1.1" transform="rotate(-17 334.1 610.0)" fill="#aad3df" opacity="0.8"/>
<ellipse cx="426.5" cy="540.4" rx="1.9" ry="1.0" transform="rotate(-32 426.5 540.4)" fill="#aad3df" opacity="0.8"/>
<ellipse cx="313.2" cy="554.9" rx="1.3" ry="0.9" transform="rotate(-21 313.2 554.9)" fill="#aad3df" opacity="0.8"/>
<ellipse cx="304.5" cy="599.1" rx="0.6" ry="1.0" transform="rotate(-46 304.5 599.1)" fill="#aad3df" opacity="0.8"/>
<ellipse cx="353.6" cy="596.5" rx="0.7" ry="0.5" transform="rotate(-19 353.6 596.5)" fill="#aad3df" opacity="0.8"/>
<ellipse cx="415.8" cy="602.8" rx="1.5" ry="1.1" transform="rotate(-21 415.8 602.8)" fill="#aad3df" opacity="0.8"/>
<ellipse cx="451.9" cy="512.3" rx="0.8" ry="0.8" transform="rotate(-37 451.9 512.3)" fill="#aad3df" opacity="0.8"/>
<ellipse cx="416.6" cy="578.7" rx="1.3" ry="1.0" transform="rotate(-15 416.6 578.7)" fill="#aad3df" opacity="0.8"/>
<ellipse cx="349.9" cy="547.7" rx="1.8" ry="1.0" transform="rotate(-43 349.9 547.7)" fill="#aad3df" opacity="0.8"/>
<ellipse cx="436.1" cy="618.2" rx="1.3" ry="0.8" transform="rotate(-44 436.1 618.2)" fill="#aad3df" opacity="0.8"/>
<ellipse cx="385.7" cy="562.4" rx="1.4" ry="0.4" transform="rotate(18 385.7 562.4)" fill="#aad3df" opacity="0.8"/>
<ellipse cx="382.6" cy="550.1" rx="1.7" ry="0.8" transform="rotate(-21 382.6 550.1)" fill="#aad3df" opacity="0.8"/>
<ellipse cx="410.6" cy="509.9" rx="1.3" ry="0.7" transform="rotate(17 410.6 509.9)" fill="#aad3df" opacity="0.8"/>
<ellipse cx="447.7" cy="534.3" rx="1.2" ry="0.5" transform="rotate(-25 447.7 534.3)" fill="#aad3df" opacity="0.8"/>
<ellipse cx="430.5" cy="610.1" rx="1.2" ry="0.6" transform="rotate(-45 430.5 610.1)" fill="#aad3df" opacity="0.8"/>
<ellipse cx="398.9" cy="613.0" rx="0.7" ry="0.9" transform="rotate(-58 398.9 613.0)" fill="#aad3df" opacity="0.8"/>
<ellipse cx="331.1" cy="529.3" rx="1.5" ry="0.6" transform="rotate(-32 331.1 529.3)" fill="#aad3df" opacity="0.8"/>
<ellipse cx="399.2" cy="514.6" rx="1.6" ry="0.5" transform="rotate(-19 399.2 514.6)" fill="#aad3df" opacity="0.8"/>
<ellipse cx="340.1" cy="525.7" rx="1.3" ry="0.7" transform="rotate(-30 340.1 525.7)" fill="#aad3df" opacity="0.8"/>
<ellipse cx="366.1" cy="565.5" rx="0.7" ry="0.5" transform="rotate(-9 366.1 565.5)" fill="#aad3df" opacity="0.8"/>
<ellipse cx="402.2" cy="565.6" rx="1.8" ry="0.8" transform="rotate(9 402.2 565.6)" fill="#aad3df" opacity="0.8"/>
<ellipse cx="337.2" cy="590.9" rx="1.7" ry="1.0" transform="rotate(-35 337.2 590.9)" fill="#aad3df" opacity="0.8"/>
<ellipse cx="350.4" cy="612.7" rx="0.8" ry="1.1" transform="rotate(11 350.4 612.7)" fill="#aad3df" opacity="0.8"/>
<ellipse cx="321.4" cy="530.7" rx="1.6" ry="0.6" transform="rotate(-52 321.4 530.7)" fill="#aad3df" opacity="0.8"/>
<ellipse cx="433.1" cy="552.6" rx="1.7" ry="0.5" transform="rotate(-28 433.1 552.6)" fill="#aad3df" opacity="0.8"/>
<ellipse cx="409.6" cy="504.1" rx="0.8" ry="0.9" transform="rotate(13 409.6 504.1)" fill="#aad3df" opacity="0.8"/>
<ellipse cx="454.9" cy="515.8" rx="1.3" ry="0.9" transform="rotate(-20 454.9 515.8)" fill="#aad3df" opacity="0.8"/>
<ellipse cx="409.7" cy="524.7" rx="0.6" ry="0.5" transform="rotate(-57 409.7 524.7)" fill="#aad3df" opacity="0.8"/>
<ellipse cx="388.3" cy="563.8" rx="1.4" ry="0.5" transform="rotate(-45 388.3 563.8)" fill="#aad3df" opacity="0.8"/>
<ellipse cx="332.6" cy="602.8" rx="2.0" ry="1.0" transform="rotate(-52 332.6 602.8)" fill="#aad3df" opacity="0.8"/>
<ellipse cx="309.9" cy="616.2" rx="1.2" ry="0.9" transform="rotate(-34 309.9 616.2)" fill="#aad3df" opacity="0.8"/>
<ellipse cx="374.7" cy="563.8" rx="1.1" ry="0.8" transform="rotate(-59 374.7 563.8)" fill="#aad3df" opacity="0.8"/>
<ellipse cx="412.2" cy="603.3" rx="0.8" ry="0.7" transform="rotate(-1 412.2 603.3)" fill="#aad3df" opacity="0.8"/>
<ellipse cx="364.8" cy="525.4" rx="0.7" ry="0.8" transform="rotate(-59 364.8 525.4)" fill="#aad3df" opacity="0.8"/>
<ellipse cx="442.9" cy="598.2" rx="1.6" ry="1.0" transform="rotate(-10 442.9 598.2)" fill="#aad3df" opacity="0.8"/>
<ellipse cx="364.7" cy="574.0" rx="1.3" ry="1.1" transform="rotate(4 364.7 574.0)" fill="#aad3df" opacity="0.8"/>
<ellipse cx="341.3" cy="611.4" rx="1.6" ry="0.9" transform="rotate(5 341.3 611.4)" fill="#aad3df" opacity="0.8"/>
<ellipse cx="364.9" cy="609.6" rx="1.8" ry="0.9" transform="rotate(1 364.9 609.6)" fill="#aad3df" opacity="0.8"/>
<ellipse cx="422.4" cy="550.7" rx="1.6" ry="0.4" transform="rotate(-33 422.4 550.7)" fill="#aad3df" opacity="0.8"/>
<ellipse cx="375.0" cy="503.3" rx="1.0" ry="0.8" transform="rotate(-10 375.0 503.3)" fill="#aad3df" opacity="0.8"/>
<ellipse cx="337.1" cy="615.4" rx="1.5" ry="0.6" transform="rotate(-7 337.1 615.4)" fill="#aad3df" opacity="0.8"/>
<ellipse cx="391.1" cy="566.0" rx="1.1" ry="1.1" transform="rotate(-9 391.1 566.0)" fill="#aad3df" opacity="0.8"/>
<ellipse cx="412.2" cy="593.4" rx="2.0" ry="0.4" transform="rotate(-11 412.2 593.4)" fill="#aad3df" opacity="0.8"/>
<ellipse cx="418.2" cy="532.8" rx="1.1" ry="0.4" transform="rotate(-44 418.2 532.8)" fill="#aad3df" opacity="0.8"/>
<ellipse cx="360.1" cy="513.8" rx="0.9" ry="1.0" transform="rotate(-16 360.1 513.8)" fill="#aad3df" opacity="0.8"/>
<ellipse cx="381.3" cy="618.1" rx="1.4" ry="1.1" transform="rotate(-9 381.3 618.1)" fill="#aad3df" opacity="0.8"/>
<ellipse cx="429.5" cy="511.1" rx="1.4" ry="0.9" transform="rotate(-56 429.5 511.1)" fill="#aad3df" opacity="0.8"/>
<ellipse cx="448.8" cy="521.2" rx="1.2" ry="0.5" transform="rotate(-20 448.8 521.2)" fill="#aad3df" opacity="0.8"/>
<ellipse cx="397.8" cy="509.0" rx="1.9" ry="0.7" transform="rotate(-18 397.8 509.0)" fill="#aad3df" opacity="0.8"/>
<ellipse cx="395.7" cy="545.9" rx="0.9" ry="0.9" transform="rotate(-15 395.7 545.9)" fill="#aad3df" opacity="0.8"/>
<ellipse cx="345.4" cy="588.0" rx="0.9" ry="0.4" transform="rotate(-40 345.4 588.0)" fill="#aad3df" opacity="0.8"/>
<ellipse cx="306.8" cy="520.8" rx="1.6" ry="0.7" transform="rotate(12 306.8 520.8)" fill="#aad3df" opacity="0.8"/>
<ellipse cx="419.7" cy="508.0" rx="2.0" ry="1.1" transform="rotate(-54 419.7 508.0)" fill="#aad3df" opacity="0.8"/>
<ellipse cx="444.9" cy="553.5" rx="1.2" ry="1.1" transform="rotate(-41 444.9 553.5)" fill="#aad3df" opacity="0.8"/>
<ellipse cx="383.7" cy="614.5" rx="1.6" ry="0.7" transform="rotate(18 383.7 614.5)" fill="#aad3df" opacity="0.8"/>
<ellipse cx="430.7" cy="574.4" rx="0.7" ry="0.8" transform="rotate(-24 430.7 574.4)" fill="#aad3df" opacity="0.8"/>
<ellipse cx="332.6" cy="508.2" rx="1.3" ry="0.5" transform="rotate(-25 332.6 508.2)" fill="#aad3df" opacity="0.8"/>
<ellipse cx="406.9" cy="556.7" rx="0.9" ry="0.8" transform="rotate(-26 406.9 556.7)" fill="#aad3df" opacity="0.8"/>
<ellipse cx="424.5" cy="565.7" rx="2.0" ry="1.1" transform="rotate(-1 424.5 565.7)" fill="#aad3df" opacity="0.8"/>
<ellipse cx="338.1" cy="515.7" rx="1.8" ry="0.9" transform="rotate(-10 338.1 515.7)" fill="#aad3df" opacity="0.8"/>
<ellipse cx="357.5" cy="534.6" rx="1.5" ry="0.8" transform="rotate(-13 357.5 534.6)" fill="#aad3df" opacity="0.8"/>
<ellipse cx="401.3" cy="592.4" rx="0.8" ry="0.6" transform="rotate(18 401.3 592.4)" fill="#aad3df" opacity="0.8"/>
<ellipse cx="446.5" cy="607.5" rx="0.6" ry="0.4" transform="rotate(-38 446.5 607.5)" fill="#aad3df" opacity="0.8"/>
<ellipse cx="368.0" cy="576.8" rx="0.7" ry="0.8" transform="rotate(-54 368.0 576.8)" fill="#aad3df" opacity="0.8"/>
<ellipse cx="313.8" cy="583.2" rx="1.3" ry="0.8" transform="rotate(-30 313.8 583.2)" fill="#aad3df" opacity="0.8"/>
<ellipse cx="376.6" cy="527.3" rx="1.0" ry="0.9" transform="rotate(7 376.6 527.3)" fill="#aad3df" opacity="0.8"/>
<ellipse cx="311.9" cy="516.4" rx="1.7" ry="0.8" transform="rotate(2 311.9 516.4)" fill="#aad3df" opacity="0.8"/>
<ellipse cx="334.1" cy="552.9" rx="0.9" ry="1.0" transform="rotate(-30 334.1 552.9)" fill="#aad3df" opacity="0.8"/>
<ellipse cx="404.6" cy="620.7" rx="1.0" ry="0.8" transform="rotate(-0 404.6 620.7)" fill="#aad3df" opacity="0.8"/>
<ellipse cx="447.3" cy="553.3" rx="1.1" ry="0.5" transform="rotate(10 447.3 553.3)" fill="#aad3df" opacity="0.8"/>
<ellipse cx="312.6" cy="512.0" rx="1.3" ry="0.7" transform="rotate(-5 312.6 512.0)" fill="#aad3df" opacity="0.8"/>
<ellipse cx="347.8" cy="595.1" rx="0.6" ry="0.5" transform="rotate(-7 347.8 595.1)" fill="#aad3df" opacity="0.8"/>
<ellipse cx="313.1" cy="538.5" rx="1.6" ry="0.9" transform="rotate(-37 313.1 538.5)" fill="#aad3df" opacity="0.8"/>
<ellipse cx="322.9" cy="544.9" rx="1.6" ry="0.7" transform="rotate(-51 322.9 544.9)" fill="#aad3df" opacity="0.8"/>
<ellipse cx="413.5" cy="570.3" rx="1.9" ry="1.1" transform="rotate(13 413.5 570.3)" fill="#aad3df" opacity="0.8"/>
<ellipse cx="370.1" cy="598.4" rx="1.0" ry="0.6" transform="rotate(-28 370.1 598.4)" fill="#aad3df" opacity="0.8"/>
<ellipse cx="449.5" cy="609.4" rx="0.9" ry="0.7" transform="rotate(-31 449.5 609.4)" fill="#aad3df" opacity="0.8"/>
<ellipse cx="358.1" cy="549.5" rx="1.1" ry="0.5" transform="rotate(-15 358.1 549.5)" fill="#aad3df" opacity="0.8"/>
<ellipse cx="427.5" cy="566.9" rx="1.8" ry="0.8" transform="rotate(-46 427.5 566.9)" fill="#aad3df" opacity="0.8"/>
<ellipse cx="421.4" cy="607.7" rx="0.9" ry="0.4" transform="rotate(-19 421.4 607.7)" fill="#aad3df" opacity="0.8"/>
<ellipse cx="387.1" cy="570.1" rx="1.9" ry="0.9" transform="rotate(4 387.1 570.1)" fill="#aad3df" opacity="0.8"/>
<ellipse cx="310.2" cy="567.6" rx="1.7" ry="0.5" transform="rotate(-53 310.2 567.6)" fill="#aad3df" opacity="0.8"/>
<ellipse cx="417.9" cy="609.9" rx="0.6" ry="0.8" transform="rotate(-48 417.9 609.9)" fill="#aad3df" opacity="0.8"/>
<ellipse cx="419.3" cy="579.9" rx="0.9" ry="0.6" transform="rotate(1 419.3 579.9)" fill="#aad3df" opacity="0.8"/>
<ellipse cx="383.4" cy="593.8" rx="1.1" ry="0.6" transform="rotate(17 383.4 593.8)" fill="#aad3df" opacity="0.8"/>
<ellipse cx="407.6" cy="561.2" rx="1.3" ry="0.9" transform="rotate(-3 407.6 561.2)" fill="#aad3df" opacity="0.8"/>
<ellipse cx="446.4" cy="551.3" rx="1.7" ry="0.9" transform="rotate(8 446.4 551.3)" fill="#aad3df" opacity="0.8"/>
<ellipse cx="428.9" cy="602.1" rx="1.8" ry="1.1" transform="rotate(-9 428.9 602.1)" fill="#aad3df" opacity="0.8"/>
<ellipse cx="383.8" cy="587.2" rx="1.7" ry="0.7" transform="rotate(-26 383.8 587.2)" fill="#aad3df" opacity="0.8"/>
<ellipse cx="323.4" cy="590.9" rx="2.0" ry="0.7" transform="rotate(-47 323.4 590.9)" fill="#aad3df" opacity="0.8"/>
<ellipse cx="332.7" cy="553.0" rx="0.9" ry="1.1" transform="rotate(-55 332.7 553.0)" fill="#aad3df" opacity="0.8"/>
<ellipse cx="349.4" cy="515.8" rx="1.5" ry="0.9" transform="rotate(-46 349.4 515.8)" fill="#aad3df" opacity="0.8"/>
<ellipse cx="310.0" cy="557.1" rx="1.4" ry="1.0" transform="rotate(-57 310.0 557.1)" fill="#aad3df" opacity="0.8"/>
<ellipse cx="317.4" cy="524.1" rx="0.8" ry="0.6" transform="rotate(-3 317.4 524.1)" fill="#aad3df" opacity="0.8"/>
<ellipse cx="395.2" cy="528.9" rx="0.8" ry="0.6" transform="rotate(-46 395.2 528.9)" fill="#aad3df" opacity="0.8"/>
<ellipse cx="421.2" cy="539.4" rx="1.3" ry="1.0" transform="rotate(-22 421.2 539.4)" fill="#aad3df" opacity="0.8"/>
<ellipse cx="341.7" cy="608.5" rx="1.9" ry="0.6" transform="rotate(-16 341.7 608.5)" fill="#aad3df" opacity="0.8"/>
<ellipse cx="453.1" cy="559.9" rx="0.8" ry="0.4" transform="rotate(16 453.1 559.9)" fill="#aad3df" opacity="0.8"/>
<ellipse cx="428.2" cy="548.2" rx="1.3" ry="0.8" transform="rotate(-38 428.2 548.2)" fill="#aad3df" opacity="0.8"/>
<ellipse cx="458.4" cy="580.9" rx="0.9" ry="0.4" transform="rotate(-22 458.4 580.9)" fill="#aad3df" opacity="0.8"/>
<ellipse cx="359.4" cy="597.6" rx="1.6" ry="0.8" transform="rotate(-47 359.4 597.6)" fill="#aad3df" opacity="0.8"/>
<ellipse cx="325.1" cy="540.6" rx="0.9" ry="1.0" transform="rotate(-19 325.1 540.6)" fill="#aad3df" opacity="0.8"/>
<ellipse cx="401.9" cy="621.2" rx="0.9" ry="0.8" transform="rotate(-48 401.9 621.2)" fill="#aad3df" opacity="0.8"/>
<ellipse cx="423.3" cy="502.2" rx="1.7" ry="1.0" transform="rotate(6 423.3 502.2)" fill="#aad3df" opacity="0.8"/>
<ellipse cx="313.2" cy="534.4" rx="1.6" ry="0.5" transform="rotate(-22 313.2 534.4)" fill="#aad3df" opacity="0.8"/>
<ellipse cx="375.0" cy="616.7" rx="1.4" ry="1.0" transform="rotate(-36 375.0 616.7)" fill="#aad3df" opacity="0.8"/>
<ellipse cx="426.3" cy="552.0" rx="1.9" ry="0.5" transform="rotate(6 426.3 552.0)" fill="#aad3df" opacity="0.8"/>
<ellipse cx="333.3" cy="567.2" rx="1.3" ry="0.5" transform="rotate(7 333.3 567.2)" fill="#aad3df" opacity="0.8"/>
<ellipse cx="349.8" cy="539.3" rx="0.6" ry="0.6" transform="rotate(-23 349.8 539.3)" fill="#aad3df" opacity="0.8"/>
<ellipse cx="414.4" cy="545.2" rx="1.5" ry="0.5" transform="rotate(-28 414.4 545.2)" fill="#aad3df" opacity="0.8"/>
<ellipse cx="373.9" cy="618.0" rx="1.7" ry="0.9" transform="rotate(-59 373.9 618.0)" fill="#aad3df" opacity="0.8"/>
<ellipse cx="360.3" cy="587.2" rx="0.9" ry="0.8" transform="rotate(-23 360.3 587.2)" fill="#aad3df" opacity="0.8"/>
<ellipse cx="301.7" cy="621.0" rx="1.7" ry="0.5" transform="rotate(-11 301.7 621.0)" fill="#aad3df" opacity="0.8"/>
<ellipse cx="346.5" cy="547.1" rx="1.3" ry="0.6" transform="rotate(-33 346.5 547.1)" fill="#aad3df" opacity="0.8"/>
<ellipse cx="362.8" cy="582.0" rx="0.9" ry="0.5" transform="rotate(-1 362.8 582.0)" fill="#aad3df" opacity="0.8"/>
<ellipse cx="352.7" cy="615.4" rx="1.3" ry="0.9" transform="rotate(-33 352.7 615.4)" fill="#aad3df" opacity="0.8"/>
<ellipse cx="432.3" cy="513.1" rx="0.7" ry="0.5" transform="rotate(-6 432.3 513.1)" fill="#aad3df" opacity="0.8"/>
<ellipse cx="413.3" cy="523.6" rx="1.1" ry="1.0" transform="rotate(-13 413.3 523.6)" fill="#aad3df" opacity="0.8"/>
<ellipse cx="314.4" cy="529.2" rx="0.7" ry="0.5" transform="rotate(-27 314.4 529.2)" fill="#aad3df" opacity="0.8"/>
<ellipse cx="311.6" cy="612.5" rx="1.1" ry="0.8" transform="rotate(-8 311.6 612.5)" fill="#aad3df" opacity="0.8"/>
<ellipse cx="422.7" cy="600.5" rx="1.1" ry="0.6" transform="rotate(-27 422.7 600.5)" fill="#aad3df" opacity="0.8"/>
<ellipse cx="302.5" cy="550.1" rx="1.5" ry="1.1" transform="rotate(3 302.5 550.1)" fill="#aad3df" opacity="0.8"/>
<ellipse cx="405.6" cy="575.0" rx="0.5" ry="0.6" transform="rotate(-33 405.6 575.0)" fill="#aad3df" opacity="0.8"/>
<ellipse cx="404.1" cy="514.8" rx="1.1" ry="0.8" transform="rotate(3 404.1 514.8)" fill="#aad3df" opacity="0.8"/>
<ellipse cx="432.0" cy="575.4" rx="0.7" ry="0.9" transform="rotate(12 432.0 575.4)" fill="#aad3df" opacity="0.8"/>
<ellipse cx="387.7" cy="544.3" rx="1.3" ry="0.5" transform="rotate(-3 387.7 544.3)" fill="#aad3df" opacity="0.8"/>
<ellipse cx="457.9" cy="563.9" rx="1.6" ry="1.0" transform="rotate(-44 457.9 563.9)" fill="#aad3df" opacity="0.8"/>
<ellipse cx="451.2" cy="577.3" rx="0.8" ry="0.5" transform="rotate(-40 451.2 577.3)" fill="#aad3df" opacity="0.8"/>
<ellipse cx="392.2" cy="585.7" rx="1.0" ry="1.1" transform="rotate(-31 392.2 585.7)" fill="#aad3df" opacity="0.8"/>
<ellipse cx="374.1" cy="516.9" rx="2.0" ry="0.5" transform="rotate(12 374.1 516.9)" fill="#aad3df" opacity="0.8"/>
<ellipse cx="386.9" cy="569.3" rx="1.3" ry="0.6" transform="rotate(13 386.9 569.3)" fill="#aad3df" opacity="0.8"/>
<ellipse cx="458.7" cy="600.1" rx="1.4" ry="0.5" transform="rotate(6 458.7 600.1)" fill="#aad3df" opacity="0.8"/>
<ellipse cx="346.2" cy="609.6" rx="0.9" ry="0.8" transform="rotate(6 346.2 609.6)" fill="#aad3df" opacity="0.8"/>
<ellipse cx="329.7" cy="567.7" rx="0.6" ry="0.4" transform="rotate(-46 329.7 567.7)" fill="#aad3df" opacity="0.8"/>
<ellipse cx="457.9" cy="614.7" rx="1.5" ry="0.6" transform="rotate(-6 457.9 614.7)" fill="#aad3df" opacity="0.8"/>
<ellipse cx="418.0" cy="547.8" rx="1.4" ry="1.0" transform="rotate(-59 418.0 547.8)" fill="#aad3df" opacity="0.8"/>
<ellipse cx="331.9" cy="558.2" rx="0.7" ry="0.7" transform="rotate(-14 331.9 558.2)" fill="#aad3df" opacity="0.8"/>
<ellipse cx="327.8" cy="564.4" rx="0.9" ry="0.8" transform="rotate(-33 327.8 564.4)" fill="#aad3df" opacity="0.8"/>
<ellipse cx="402.7" cy="506.5" rx="1.5" ry="0.5" transform="rotate(17 402.7 506.5)" fill="#aad3df" opacity="0.8"/>
<ellipse cx="396.0" cy="558.4" rx="1.1" ry="0.8" transform="rotate(-5 396.0 558.4)" fill="#aad3df" opacity="0.8"/>
<ellipse cx="421.3" cy="592.2" rx="1.2" ry="1.1" transform="rotate(7 421.3 592.2)" fill="#aad3df" opacity="0.8"/>
<ellipse cx="436.8" cy="551.1" rx="1.2" ry="0.8" transform="rotate(12 436.8 551.1)" fill="#aad3df" opacity="0.8"/>
<ellipse cx="384.2" cy="565.0" rx="1.1" ry="1.0" transform="rotate(-34 384.2 565.0)" fill="#aad3df" opacity="0.8"/>
<ellipse cx="308.7" cy="589.1" rx="1.9" ry="0.9" transform="rotate(-12 308.7 589.1)" fill="#aad3df" opacity="0.8"/>
<ellipse cx="420.3" cy="538.6" rx="1.4" ry="0.4" transform="rotate(-50 420.3 538.6)" fill="#aad3df" opacity="0.8"/>
<ellipse cx="371.5" cy="562.3" rx="1.1" ry="0.4" transform="rotate(-4 371.5 562.3)" fill="#aad3df" opacity="0.8"/>
<ellipse cx="384.2" cy="530.7" rx="1.0" ry="0.7" transform="rotate(-41 384.2 530.7)" fill="#aad3df" opacity="0.8"/>
<ellipse cx="311.0" cy="611.4" rx="1.9" ry="0.9" transform="rotate(9 311.0 611.4)" fill="#aad3df" opacity="0.8"/>
<ellipse cx="367.4" cy="598.6" rx="0.8" ry="0.9" transform="rotate(-15 367.4 598.6)" fill="#aad3df" opacity="0.8"/>
<ellipse cx="444.5" cy="513.8" rx="1.7" ry="0.5" transform="rotate(-17 444.5 513.8)" fill="#aad3df" opacity="0.8"/>
<ellipse cx="452.2" cy="502.1" rx="0.9" ry="0.6" transform="rotate(-34 452.2 502.1)" fill="#aad3df" opacity="0.8"/>
<ellipse cx="310.0" cy="609.4" rx="1.7" ry="0.7" transform="rotate(-31 310.0 609.4)" fill="#aad3df" opacity="0.8"/>
<ellipse cx="393.7" cy="507.5" rx="0.5" ry="1.0" transform="rotate(-35 393.7 507.5)" fill="#aad3df" opacity="0.8"/>
<ellipse cx="379.7" cy="614.1" rx="2.0" ry="0.7" transform="rotate(-43 379.7 614.1)" fill="#aad3df" opacity="0.8"/>
<ellipse cx="347.3" cy="612.7" rx="1.8" ry="0.5" transform="rotate(7 347.3 612.7)" fill="#aad3df" opacity="0.8"/>
<ellipse cx="356.7" cy="558.7" rx="0.8" ry="1.0" transform="rotate(20 356.7 558.7)" fill="#aad3df" opacity="0.8"/>
<ellipse cx="332.3" cy="577.9" rx="0.8" ry="1.0" transform="rotate(-56 332.3 577.9)" fill="#aad3df" opacity="0.8"/>
<ellipse cx="317.0" cy="589.1" rx="1.0" ry="1.0" transform="rotate(10 317.0 589.1)" fill="#aad3df" opacity="0.8"/>
<ellipse cx="414.1" cy="518.2" rx="1.5" ry="1.1" transform="rotate(-24 414.1 518.2)" fill="#aad3df" opacity="0.8"/>
<ellipse cx="312.6" cy="528.8" rx="1.0" ry="0.9" transform="rotate(-44 312.6 528.8)" fill="#aad3df" opacity="0.8"/>
<ellipse cx="329.0" cy="530.3" rx="1.5" ry="1.0" transform="rotate(-30 329.0 530.3)" fill="#aad3df" opacity="0.8"/>
<ellipse cx="405.9" cy="608.1" rx="1.4" ry="0.6" transform="rotate(-36 405.9 608.1)" fill="#aad3df" opacity="0.8"/>
<ellipse cx="448.3" cy="582.0" rx="0.9" ry="0.8" transform="rotate(-53 448.3 582.0)" fill="#aad3df" opacity="0.8"/>
<ellipse cx="457.3" cy="554.8" rx="1.3" ry="0.8" transform="rotate(-56 457.3 554.8)" fill="#aad3df" opacity="0.8"/>
<ellipse cx="396.0" cy="536.1" rx="0.9" ry="1.0" transform="rotate(-53 396.0 536.1)" fill="#aad3df" opacity="0.8"/>
<ellipse cx="345.6" cy="592.7" rx="0.9" ry="0.6" transform="rotate(-16 345.6 592.7)" fill="#aad3df" opacity="0.8"/>
<ellipse cx="329.8" cy="609.6" rx="2.0" ry="0.4" transform="rotate(-23 329.8 609.6)" fill="#aad3df" opacity="0.8"/>
<ellipse cx="420.1" cy="548.2" rx="1.9" ry="0.7" transform="rotate(-46 420.1 548.2)" fill="#aad3df" opacity="0.8"/>
<ellipse cx="389.0" cy="579.4" rx="1.0" ry="0.9" transform="rotate(3 389.0 579.4)" fill="#aad3df" opacity="0.8"/>
<ellipse cx="382.7" cy="562.7" rx="1.8" ry="0.9" transform="rotate(-18 382.7 562.7)" fill="#aad3df" opacity="0.8"/>
<ellipse cx="555.2" cy="575.7" rx="1.7" ry="0.5" transform="rotate(-11 555.2 575.7)" fill="#aad3df" opacity="0.8"/>
<ellipse cx="483.5" cy="599.6" rx="1.7" ry="1.0" transform="rotate(3 483.5 599.6)" fill="#aad3df" opacity="0.8"/>
<ellipse cx="483.6" cy="604.0" rx="0.8" ry="0.8" transform="rotate(-20 483.6 604.0)" fill="#aad3df" opacity="0.8"/>
<ellipse cx="463.5" cy="613.7" rx="1.6" ry="0.8" transform="rotate(10 463.5 613.7)" fill="#aad3df" opacity="0.8"/>
<ellipse cx="478.0" cy="573.7" rx="0.5" ry="0.7" transform="rotate(-25 478.0 573.7)" fill="#aad3df" opacity="0.8"/>
<ellipse cx="504.2" cy="583.7" rx="1.7" ry="0.5" transform="rotate(13 504.2 583.7)" fill="#aad3df" opacity="0.8"/>
<ellipse cx="516.9" cy="608.9" rx="1.7" ry="0.6" transform="rotate(-48 516.9 608.9)" fill="#aad3df" opacity="0.8"/>
<ellipse cx="491.1" cy="563.8" rx="1.0" ry="0.8" transform="rotate(-18 491.1 563.8)" fill="#aad3df" opacity="0.8"/>
<ellipse cx="486.5" cy="613.0" rx="0.6" ry="1.0" transform="rotate(-46 486.5 613.0)" fill="#aad3df" opacity="0.8"/>
<ellipse cx="485.5" cy="574.4" rx="1.5" ry="1.0" transform="rotate(3 485.5 574.4)" fill="#aad3df" opacity="0.8"/>
<ellipse cx="466.1" cy="597.0" rx="1.0" ry="0.6" transform="rotate(18 466.1 597.0)" fill="#aad3df" opacity="0.8"/>
<ellipse cx="464.2" cy="604.1" rx="1.6" ry="1.1" transform="rotate(-48 464.2 604.1)" fill="#aad3df" opacity="0.8"/>
<ellipse cx="505.5" cy="627.0" rx="0.6" ry="0.6" transform="rotate(11 505.5 627.0)" fill="#aad3df" opacity="0.8"/>
<ellipse cx="474.2" cy="595.4" rx="0.9" ry="0.7" transform="rotate(-54 474.2 595.4)" fill="#aad3df" opacity="0.8"/>
<ellipse cx="463.4" cy="649.7" rx="1.6" ry="0.9" transform="rotate(-42 463.4 649.7)" fill="#aad3df" opacity="0.8"/>
<ellipse cx="485.3" cy="609.7" rx="0.9" ry="0.7" transform="rotate(15 485.3 609.7)" fill="#aad3df" opacity="0.8"/>
<ellipse cx="496.4" cy="590.3" rx="2.0" ry="0.8" transform="rotate(-57 496.4 590.3)" fill="#aad3df" opacity="0.8"/>
<ellipse cx="500.3" cy="618.5" rx="0.6" ry="0.6" transform="rotate(-4 500.3 618.5)" fill="#aad3df" opacity="0.8"/>
<ellipse cx="546.4" cy="613.2" rx="1.8" ry="0.7" transform="rotate(-29 546.4 613.2)" fill="#aad3df" opacity="0.8"/>
<ellipse cx="544.3" cy="594.3" rx="1.7" ry="0.6" transform="rotate(-32 544.3 594.3)" fill="#aad3df" opacity="0.8"/>
<ellipse cx="478.4" cy="609.5" rx="0.7" ry="0.5" transform="rotate(-43 478.4 609.5)" fill="#aad3df" opacity="0.8"/>
<ellipse cx="506.8" cy="587.8" rx="1.2" ry="1.1" transform="rotate(-6 506.8 587.8)" fill="#aad3df" opacity="0.8"/>
<ellipse cx="546.3" cy="578.4" rx="1.1" ry="0.5" transform="rotate(-5 546.3 578.4)" fill="#aad3df" opacity="0.8"/>
<ellipse cx="496.3" cy="584.7" rx="0.5" ry="0.5" transform="rotate(-39 496.3 584.7)" fill="#aad3df" opacity="0.8"/>
<ellipse cx="499.3" cy="643.1" rx="1.6" ry="0.6" transform="rotate(-31 499.3 643.1)" fill="#aad3df" opacity="0.8"/>
<ellipse cx="475.4" cy="644.3" rx="1.0" ry="0.9" transform="rotate(-2 475.4 644.3)" fill="#aad3df" opacity="0.8"/>
<ellipse cx="550.7" cy="561.8" rx="1.0" ry="0.7" transform="rotate(-53 550.7 561.8)" fill="#aad3df" opacity="0.8"/>
<ellipse cx="548.2" cy="589.3" rx="1.7" ry="0.8" transform="rotate(-56 548.2 589.3)" fill="#aad3df" opacity="0.8"/>
<ellipse cx="499.4" cy="581.4" rx="0.6" ry="0.5" transform="rotate(-12 499.4 581.4)" fill="#aad3df" opacity="0.8"/>
<ellipse cx="463.2" cy="588.1" rx="1.1" ry="0.8" transform="rotate(-49 463.2 588.1)" fill="#aad3df" opacity="0.8"/>
<ellipse cx="530.7" cy="583.4" rx="1.6" ry="0.9" transform="rotate(-48 530.7 583.4)" fill="#aad3df" opacity="0.8"/>
<ellipse cx="480.5" cy="585.2" rx="1.6" ry="0.7" transform="rotate(-29 480.5 585.2)" fill="#aad3df" opacity="0.8"/>
<ellipse cx="546.6" cy="580.3" rx="0.9" ry="0.6" transform="rotate(-43 546.6 580.3)" fill="#aad3df" opacity="0.8"/>
<ellipse cx="464.1" cy="562.2" rx="1.4" ry="0.8" transform="rotate(5 464.1 562.2)" fill="#aad3df" opacity="0.8"/>
<ellipse cx="557.6" cy="586.8" rx="1.5" ry="1.0" transform="rotate(-43 557.6 586.8)" fill="#aad3df" opacity="0.8"/>
<ellipse cx="528.9" cy="620.0" rx="1.9" ry="1.0" transform="rotate(-41 528.9 620.0)" fill="#aad3df" opacity="0.8"/>
<ellipse cx="523.3" cy="568.1" rx="1.1" ry="0.7" transform="rotate(-55 523.3 568.1)" fill="#aad3df" opacity="0.8"/>
<ellipse cx="498.3" cy="589.5" rx="1.2" ry="0.6" transform="rotate(-47 498.3 589.5)" fill="#aad3df" opacity="0.8"/>
<ellipse cx="500.2" cy="602.8" rx="0.8" ry="0.9" transform="rotate(-41 500.2 602.8)" fill="#aad3df" opacity="0.8"/>
<ellipse cx="469.3" cy="590.8" rx="1.1" ry="0.5" transform="rotate(-13 469.3 590.8)" fill="#aad3df" opacity="0.8"/>
<ellipse cx="530.1" cy="609.8" rx="1.6" ry="0.4" transform="rotate(-29 530.1 609.8)" fill="#aad3df" opacity="0.8"/>
<ellipse cx="496.4" cy="565.7" rx="1.1" ry="0.4" transform="rotate(-20 496.4 565.7)" fill="#aad3df" opacity="0.8"/>
<ellipse cx="518.6" cy="602.2" rx="1.0" ry="0.6" transform="rotate(-58 518.6 602.2)" fill="#aad3df" opacity="0.8"/>
<ellipse cx="494.7" cy="640.3" rx="1.3" ry="0.6" transform="rotate(-7 494.7 640.3)" fill="#aad3df" opacity="0.8"/>
<ellipse cx="478.6" cy="602.2" rx="1.4" ry="1.1" transform="rotate(-31 478.6 602.2)" fill="#aad3df" opacity="0.8"/>
<ellipse cx="517.6" cy="644.8" rx="1.7" ry="0.8" transform="rotate(-10 517.6 644.8)" fill="#aad3df" opacity="0.8"/>
<ellipse cx="501.1" cy="597.4" rx="0.9" ry="1.0" transform="rotate(10 501.1 597.4)" fill="#aad3df" opacity="0.8"/>
<ellipse cx="498.2" cy="641.9" rx="0.6" ry="0.5" transform="rotate(-19 498.2 641.9)" fill="#aad3df" opacity="0.8"/>
<ellipse cx="490.9" cy="592.4" rx="2.0" ry="0.5" transform="rotate(-45 490.9 592.4)" fill="#aad3df" opacity="0.8"/>
<ellipse cx="482.8" cy="621.2" rx="0.9" ry="0.4" transform="rotate(-16 482.8 621.2)" fill="#aad3df" opacity="0.8"/>
<ellipse cx="611.2" cy="537.4" rx="1.2" ry="0.9" transform="rotate(-16 611.2 537.4)" fill="#aad3df" opacity="0.8"/>
<ellipse cx="641.2" cy="585.0" rx="1.7" ry="1.1" transform="rotate(-33 641.2 585.0)" fill="#aad3df" opacity="0.8"/>
<ellipse cx="605.1" cy="633.2" rx="1.0" ry="0.9" transform="rotate(-4 605.1 633.2)" fill="#aad3df" opacity="0.8"/>
<ellipse cx="649.3" cy="644.7" rx="1.7" ry="0.5" transform="rotate(-10 649.3 644.7)" fill="#aad3df" opacity="0.8"/>
<ellipse cx="623.8" cy="585.4" rx="1.1" ry="0.6" transform="rotate(-0 623.8 585.4)" fill="#aad3df" opacity="0.8"/>
<ellipse cx="629.4" cy="537.1" rx="0.9" ry="0.6" transform="rotate(-46 629.4 537.1)" fill="#aad3df" opacity="0.8"/>
<ellipse cx="626.8" cy="520.6" rx="0.6" ry="0.4" transform="rotate(-52 626.8 520.6)" fill="#aad3df" opacity="0.8"/>
<ellipse cx="651.6" cy="518.7" rx="1.2" ry="0.9" transform="rotate(-22 651.6 518.7)" fill="#aad3df" opacity="0.8"/>
<ellipse cx="581.1" cy="630.2" rx="1.8" ry="0.4" transform="rotate(-40 581.1 630.2)" fill="#aad3df" opacity="0.8"/>
<ellipse cx="626.0" cy="619.9" rx="1.1" ry="0.9" transform="rotate(-40 626.0 619.9)" fill="#aad3df" opacity="0.8"/>
<ellipse cx="653.0" cy="550.4" rx="1.0" ry="0.9" transform="rotate(7 653.0 550.4)" fill="#aad3df" opacity="0.8"/>
<ellipse cx="667.7" cy="586.0" rx="1.1" ry="0.9" transform="rotate(-10 667.7 586.0)" fill="#aad3df" opacity="0.8"/>
<ellipse cx="668.0" cy="620.6" rx="0.7" ry="0.7" transform="rotate(-6 668.0 620.6)" fill="#aad3df" opacity="0.8"/>
<ellipse cx="590.0" cy="529.3" rx="0.5" ry="0.8" transform="rotate(15 590.0 529.3)" fill="#aad3df" opacity="0.8"/>
<ellipse cx="686.2" cy="521.8" rx="1.5" ry="0.7" transform="rotate(-9 686.2 521.8)" fill="#aad3df" opacity="0.8"/>
<ellipse cx="611.6" cy="640.1" rx="2.0" ry="0.4" transform="rotate(-3 611.6 640.1)" fill="#aad3df" opacity="0.8"/>
<ellipse cx="575.4" cy="508.3" rx="0.9" ry="0.9" transform="rotate(19 575.4 508.3)" fill="#aad3df" opacity="0.8"/>
<ellipse cx="575.6" cy="550.8" rx="0.5" ry="0.8" transform="rotate(-21 575.6 550.8)" fill="#aad3df" opacity="0.8"/>
<ellipse cx="608.5" cy="547.8" rx="1.7" ry="1.0" transform="rotate(-37 608.5 547.8)" fill="#aad3df" opacity="0.8"/>
<ellipse cx="610.9" cy="593.4" rx="1.6" ry="1.1" transform="rotate(-29 610.9 593.4)" fill="#aad3df" opacity="0.8"/>
<ellipse cx="650.2" cy="582.8" rx="1.7" ry="0.5" transform="rotate(-46 650.2 582.8)" fill="#aad3df" opacity="0.8"/>
<ellipse cx="573.9" cy="640.2" rx="0.9" ry="0.7" transform="rotate(-50 573.9 640.2)" fill="#aad3df" opacity="0.8"/>
<ellipse cx="602.1" cy="504.8" rx="1.3" ry="0.5" transform="rotate(-10 602.1 504.8)" fill="#aad3df" opacity="0.8"/>
<ellipse cx="595.6" cy="535.7" rx="1.2" ry="0.7" transform="rotate(-39 595.6 535.7)" fill="#aad3df" opacity="0.8"/>
<ellipse cx="566.7" cy="511.5" rx="1.8" ry="0.6" transform="rotate(-54 566.7 511.5)" fill="#aad3df" opacity="0.8"/>
<ellipse cx="583.7" cy="573.5" rx="2.0" ry="0.5" transform="rotate(9 583.7 573.5)" fill="#aad3df" opacity="0.8"/>
<ellipse cx="623.0" cy="563.4" rx="1.7" ry="0.7" transform="rotate(-55 623.0 563.4)" fill="#aad3df" opacity="0.8"/>
<ellipse cx="631.6" cy="599.2" rx="1.4" ry="0.6" transform="rotate(15 631.6 599.2)" fill="#aad3df" opacity="0.8"/>
<ellipse cx="672.4" cy="649.2" rx="1.2" ry="1.0" transform="rotate(-2 672.4 649.2)" fill="#aad3df" opacity="0.8"/>
<ellipse cx="582.9" cy="506.0" rx="0.8" ry="0.5" transform="rotate(-54 582.9 506.0)" fill="#aad3df" opacity="0.8"/>
<ellipse cx="606.7" cy="613.5" rx="1.0" ry="0.8" transform="rotate(-59 606.7 613.5)" fill="#aad3df" opacity="0.8"/>
<ellipse cx="587.3" cy="644.0" rx="0.5" ry="0.8" transform="rotate(5 587.3 644.0)" fill="#aad3df" opacity="0.8"/>
<ellipse cx="663.0" cy="610.8" rx="1.1" ry="1.0" transform="rotate(6 663.0 610.8)" fill="#aad3df" opacity="0.8"/>
<ellipse cx="659.8" cy="647.9" rx="0.7" ry="1.1" transform="rotate(-28 659.8 647.9)" fill="#aad3df" opacity="0.8"/>
<ellipse cx="651.7" cy="539.1" rx="1.9" ry="0.4" transform="rotate(-14 651.7 539.1)" fill="#aad3df" opacity="0.8"/>
<ellipse cx="589.5" cy="559.5" rx="1.1" ry="0.9" transform="rotate(5 589.5 559.5)" fill="#aad3df" opacity="0.8"/>
<ellipse cx="607.4" cy="596.4" rx="1.0" ry="0.6" transform="rotate(12 607.4 596.4)" fill="#aad3df" opacity="0.8"/>
<ellipse cx="601.8" cy="515.9" rx="1.0" ry="0.9" transform="rotate(-43 601.8 515.9)" fill="#aad3df" opacity="0.8"/>
<ellipse cx="656.6" cy="582.8" rx="1.5" ry="0.5" transform="rotate(-52 656.6 582.8)" fill="#aad3df" opacity="0.8"/>
<ellipse cx="578.6" cy="553.8" rx="1.1" ry="0.4" transform="rotate(-20 578.6 553.8)" fill="#aad3df" opacity="0.8"/>
<ellipse cx="612.4" cy="549.6" rx="1.3" ry="1.1" transform="rotate(-44 612.4 549.6)" fill="#aad3df" opacity="0.8"/>
<ellipse cx="674.5" cy="549.5" rx="1.6" ry="0.5" transform="rotate(19 674.5 549.5)" fill="#aad3df" opacity="0.8"/>
<ellipse cx="615.9" cy="644.5" rx="0.8" ry="0.7" transform="rotate(-4 615.9 644.5)" fill="#aad3df" opacity="0.8"/>
<ellipse cx="583.1" cy="542.5" rx="1.5" ry="1.1" transform="rotate(-34 583.1 542.5)" fill="#aad3df" opacity="0.8"/>
<ellipse cx="583.8" cy="554.9" rx="2.0" ry="0.5" transform="rotate(-9 583.8 554.9)" fill="#aad3df" opacity="0.8"/>
<ellipse cx="609.2" cy="597.3" rx="0.8" ry="0.8" transform="rotate(11 609.2 597.3)" fill="#aad3df" opacity="0.8"/>
<ellipse cx="671.3" cy="595.0" rx="1.3" ry="0.8" transform="rotate(-51 671.3 595.0)" fill="#aad3df" opacity="0.8"/>
<ellipse cx="668.9" cy="604.1" rx="1.2" ry="0.9" transform="rotate(-26 668.9 604.1)" fill="#aad3df" opacity="0.8"/>
<ellipse cx="610.0" cy="536.0" rx="1.4" ry="0.8" transform="rotate(-19 610.0 536.0)" fill="#aad3df" opacity="0.8"/>
<ellipse cx="564.2" cy="594.8" rx="1.2" ry="0.8" transform="rotate(-12 564.2 594.8)" fill="#aad3df" opacity="0.8"/>
<ellipse cx="681.1" cy="524.5" rx="1.2" ry="1.1" transform="rotate(-1 681.1 524.5)" fill="#aad3df" opacity="0.8"/>
<ellipse cx="600.7" cy="611.0" rx="2.0" ry="0.7" transform="rotate(9 600.7 611.0)" fill="#aad3df" opacity="0.8"/>
<ellipse cx="576.5" cy="648.5" rx="1.2" ry="0.6" transform="rotate(7 576.5 648.5)" fill="#aad3df" opacity="0.8"/>
<ellipse cx="644.4" cy="640.8" rx="1.7" ry="1.0" transform="rotate(-19 644.4 640.8)" fill="#aad3df" opacity="0.8"/>
<ellipse cx="689.2" cy="511.6" rx="1.8" ry="0.9" transform="rotate(-40 689.2 511.6)" fill="#aad3df" opacity="0.8"/>
<ellipse cx="664.9" cy="569.2" rx="1.3" ry="1.0" transform="rotate(-44 664.9 569.2)" fill="#aad3df" opacity="0.8"/>
<ellipse cx="596.4" cy="597.3" rx="0.6" ry="0.8" transform="rotate(3 596.4 597.3)" fill="#aad3df" opacity="0.8"/>
<ellipse cx="623.8" cy="537.8" rx="1.7" ry="1.0" transform="rotate(2 623.8 537.8)" fill="#aad3df" opacity="0.8"/>
<ellipse cx="631.4" cy="636.0" rx="1.7" ry="0.5" transform="rotate(-31 631.4 636.0)" fill="#aad3df" opacity="0.8"/>
<ellipse cx="573.0" cy="507.4" rx="1.0" ry="1.0" transform="rotate(7 573.0 507.4)" fill="#aad3df" opacity="0.8"/>
<ellipse cx="575.3" cy="528.9" rx="1.1" ry="1.0" transform="rotate(-11 575.3 528.9)" fill="#aad3df" opacity="0.8"/>
<ellipse cx="677.2" cy="512.6" rx="2.0" ry="0.5" transform="rotate(-10 677.2 512.6)" fill="#aad3df" opacity="0.8"/>
<ellipse cx="674.0" cy="609.7" rx="0.8" ry="0.9" transform="rotate(-26 674.0 609.7)" fill="#aad3df" opacity="0.8"/>
<ellipse cx="562.0" cy="552.3" rx="1.0" ry="0.8" transform="rotate(-38 562.0 552.3)" fill="#aad3df" opacity="0.8"/>
<ellipse cx="638.4" cy="604.8" rx="0.8" ry="0.5" transform="rotate(-4 638.4 604.8)" fill="#aad3df" opacity="0.8"/>
<ellipse cx="620.6" cy="521.1" rx="0.7" ry="1.1" transform="rotate(-11 620.6 521.1)" fill="#aad3df" opacity="0.8"/>
<ellipse cx="606.5" cy="531.0" rx="2.0" ry="0.9" transform="rotate(-1 606.5 531.0)" fill="#aad3df" opacity="0.8"/>
<ellipse cx="606.8" cy="547.9" rx="1.1" ry="0.5" transform="rotate(-10 606.8 547.9)" fill="#aad3df" opacity="0.8"/>
<ellipse cx="615.2" cy="623.4" rx="1.1" ry="0.7" transform="rotate(-19 615.2 623.4)" fill="#aad3df" opacity="0.8"/>
<ellipse cx="682.4" cy="553.3" rx="1.6" ry="0.6" transform="rotate(-14 682.4 553.3)" fill="#aad3df" opacity="0.8"/>
<ellipse cx="597.0" cy="631.2" rx="0.9" ry="1.0" transform="rotate(-6 597.0 631.2)" fill="#aad3df" opacity="0.8"/>
<ellipse cx="619.1" cy="640.2" rx="1.1" ry="0.9" transform="rotate(-12 619.1 640.2)" fill="#aad3df" opacity="0.8"/>
<ellipse cx="618.3" cy="511.5" rx="1.1" ry="0.6" transform="rotate(-25 618.3 511.5)" fill="#aad3df" opacity="0.8"/>
<ellipse cx="684.1" cy="545.4" rx="1.5" ry="0.9" transform="rotate(-40 684.1 545.4)" fill="#aad3df" opacity="0.8"/>
<ellipse cx="613.5" cy="521.6" rx="1.8" ry="0.6" transform="rotate(-26 613.5 521.6)" fill="#aad3df" opacity="0.8"/>
<ellipse cx="604.4" cy="623.4" rx="1.8" ry="0.8" transform="rotate(-16 604.4 623.4)" fill="#aad3df" opacity="0.8"/>
<ellipse cx="572.9" cy="634.7" rx="0.6" ry="0.7" transform="rotate(-30 572.9 634.7)" fill="#aad3df" opacity="0.8"/>
<ellipse cx="654.0" cy="601.0" rx="1.0" ry="1.0" transform="rotate(16 654.0 601.0)" fill="#aad3df" opacity="0.8"/>
<ellipse cx="563.0" cy="595.7" rx="1.2" ry="0.7" transform="rotate(-23 563.0 595.7)" fill="#aad3df" opacity="0.8"/>
<ellipse cx="601.1" cy="601.3" rx="1.4" ry="1.1" transform="rotate(18 601.1 601.3)" fill="#aad3df" opacity="0.8"/>
<ellipse cx="689.0" cy="560.5" rx="1.7" ry="0.9" transform="rotate(-4 689.0 560.5)" fill="#aad3df" opacity="0.8"/>
<ellipse cx="689.7" cy="511.8" rx="1.2" ry="0.7" transform="rotate(-8 689.7 511.8)" fill="#aad3df" opacity="0.8"/>
<ellipse cx="588.3" cy="648.5" rx="0.8" ry="0.7" transform="rotate(-49 588.3 648.5)" fill="#aad3df" opacity="0.8"/>
<ellipse cx="611.3" cy="611.8" rx="0.6" ry="0.5" transform="rotate(-8 611.3 611.8)" fill="#aad3df" opacity="0.8"/>
<ellipse cx="641.0" cy="611.8" rx="0.9" ry="1.0" transform="rotate(-2 641.0 611.8)" fill="#aad3df" opacity="0.8"/>
<ellipse cx="660.9" cy="519.7" rx="1.2" ry="0.4" transform="rotate(9 660.9 519.7)" fill="#aad3df" opacity="0.8"/>
<ellipse cx="682.8" cy="634.6" rx="0.5" ry="0.6" transform="rotate(-17 682.8 634.6)" fill="#aad3df" opacity="0.8"/>
<ellipse cx="629.4" cy="518.5" rx="1.7" ry="0.6" transform="rotate(-19 629.4 518.5)" fill="#aad3df" opacity="0.8"/>
<ellipse cx="576.2" cy="586.0" rx="0.7" ry="0.5" transform="rotate(-19 576.2 586.0)" fill="#aad3df" opacity="0.8"/>
<ellipse cx="598.2" cy="617.1" rx="0.9" ry="0.7" transform="rotate(-56 598.2 617.1)" fill="#aad3df" opacity="0.8"/>
<ellipse cx="588.3" cy="568.9" rx="1.3" ry="0.7" transform="rotate(8 588.3 568.9)" fill="#aad3df" opacity="0.8"/>
<ellipse cx="573.6" cy="627.8" rx="0.7" ry="1.1" transform="rotate(-18 573.6 627.8)" fill="#aad3df" opacity="0.8"/>
<ellipse cx="612.8" cy="592.6" rx="1.8" ry="1.1" transform="rotate(-27 612.8 592.6)" fill="#aad3df" opacity="0.8"/>
<ellipse cx="561.4" cy="524.8" rx="1.7" ry="0.9" transform="rotate(-3 561.4 524.8)" fill="#aad3df" opacity="0.8"/>
<ellipse cx="580.4" cy="580.6" rx="0.5" ry="0.5" transform="rotate(-36 580.4 580.6)" fill="#aad3df" opacity="0.8"/>
<ellipse cx="685.6" cy="597.2" rx="1.8" ry="0.4" transform="rotate(-27 685.6 597.2)" fill="#aad3df" opacity="0.8"/>
<ellipse cx="570.2" cy="540.6" rx="0.7" ry="1.0" transform="rotate(-34 570.2 540.6)" fill="#aad3df" opacity="0.8"/>
<ellipse cx="623.6" cy="598.8" rx="1.8" ry="1.1" transform="rotate(-15 623.6 598.8)" fill="#aad3df" opacity="0.8"/>
<ellipse cx="625.1" cy="635.8" rx="1.1" ry="0.6" transform="rotate(-1 625.1 635.8)" fill="#aad3df" opacity="0.8"/>
<ellipse cx="593.6" cy="556.4" rx="1.1" ry="0.7" transform="rotate(-31 593.6 556.4)" fill="#aad3df" opacity="0.8"/>
<ellipse cx="616.0" cy="568.7" rx="0.6" ry="1.0" transform="rotate(-55 616.0 568.7)" fill="#aad3df" opacity="0.8"/>
<ellipse cx="628.6" cy="583.0" rx="1.1" ry="0.6" transform="rotate(-52 628.6 583.0)" fill="#aad3df" opacity="0.8"/>
<ellipse cx="608.4" cy="548.5" rx="1.2" ry="0.6" transform="rotate(-0 608.4 548.5)" fill="#aad3df" opacity="0.8"/>
<ellipse cx="623.4" cy="503.3" rx="1.1" ry="1.1" transform="rotate(-59 623.4 503.3)" fill="#aad3df" opacity="0.8"/>
<ellipse cx="637.1" cy="644.2" rx="1.0" ry="0.8" transform="rotate(-30 637.1 644.2)" fill="#aad3df" opacity="0.8"/>
<ellipse cx="599.2" cy="592.2" rx="1.4" ry="0.6" transform="rotate(-20 599.2 592.2)" fill="#aad3df" opacity="0.8"/>
<ellipse cx="627.1" cy="613.6" rx="0.6" ry="0.5" transform="rotate(-40 627.1 613.6)" fill="#aad3df" opacity="0.8"/>
<ellipse cx="595.1" cy="619.8" rx="1.1" ry="1.0" transform="rotate(-28 595.1 619.8)" fill="#aad3df" opacity="0.8"/>
<ellipse cx="597.2" cy="602.6" rx="0.6" ry="1.1" transform="rotate(7 597.2 602.6)" fill="#aad3df" opacity="0.8"/>
<ellipse cx="602.7" cy="549.0" rx="1.7" ry="1.0" transform="rotate(-9 602.7 549.0)" fill="#aad3df" opacity="0.8"/>
<ellipse cx="595.7" cy="688.2" rx="0.6" ry="0.8" transform="rotate(-16 595.7 688.2)" fill="#aad3df" opacity="0.8"/>
<ellipse cx="682.7" cy="681.9" rx="0.5" ry="1.1" transform="rotate(0 682.7 681.9)" fill="#aad3df" opacity="0.8"/>
<ellipse cx="648.0" cy="650.3" rx="1.6" ry="0.7" transform="rotate(-6 648.0 650.3)" fill="#aad3df" opacity="0.8"/>
<ellipse cx="688.4" cy="695.8" rx="0.6" ry="0.9" transform="rotate(-25 688.4 695.8)" fill="#aad3df" opacity="0.8"/>
<ellipse cx="665.2" cy="668.9" rx="1.2" ry="0.7" transform="rotate(-51 665.2 668.9)" fill="#aad3df" opacity="0.8"/>
<ellipse cx="622.0" cy="686.7" rx="0.6" ry="0.5" transform="rotate(7 622.0 686.7)" fill="#aad3df" opacity="0.8"/>
<ellipse cx="656.6" cy="677.4" rx="0.7" ry="0.5" transform="rotate(-35 656.6 677.4)" fill="#aad3df" opacity="0.8"/>
<ellipse cx="685.4" cy="678.0" rx="1.9" ry="0.5" transform="rotate(-27 685.4 678.0)" fill="#aad3df" opacity="0.8"/>
<ellipse cx="643.6" cy="692.0" rx="0.7" ry="1.0" transform="rotate(-22 643.6 692.0)" fill="#aad3df" opacity="0.8"/>
<ellipse cx="593.1" cy="671.6" rx="1.1" ry="0.9" transform="rotate(14 593.1 671.6)" fill="#aad3df" opacity="0.8"/>
<ellipse cx="639.4" cy="684.5" rx="1.1" ry="0.9" transform="rotate(-52 639.4 684.5)" fill="#aad3df" opacity="0.8"/>
<ellipse cx="664.2" cy="658.3" rx="1.4" ry="0.5" transform="rotate(-32 664.2 658.3)" fill="#aad3df" opacity="0.8"/>
<ellipse cx="606.4" cy="667.5" rx="1.4" ry="0.8" transform="rotate(-29 606.4 667.5)" fill="#aad3df" opacity="0.8"/>
<ellipse cx="647.4" cy="692.1" rx="1.0" ry="0.8" transform="rotate(-22 647.4 692.1)" fill="#aad3df" opacity="0.8"/>
<ellipse cx="688.1" cy="666.4" rx="1.5" ry="0.6" transform="rotate(-39 688.1 666.4)" fill="#aad3df" opacity="0.8"/>
<ellipse cx="590" cy="546" rx="6" ry="2.2" transform="rotate(-10 590 546)" fill="#aad3df" opacity="0.85"/>
<ellipse cx="603" cy="543" rx="5" ry="2" transform="rotate(-20 603 543)" fill="#aad3df" opacity="0.85"/>
<ellipse cx="612" cy="541" rx="4" ry="1.8" transform="rotate(0 612 541)" fill="#aad3df" opacity="0.85"/>
<ellipse cx="631" cy="522" rx="6" ry="1.8" transform="rotate(-15 631 522)" fill="#aad3df" opacity="0.85"/>
<ellipse cx="665" cy="533" rx="6" ry="3.5" transform="rotate(30 665 533)" fill="#aad3df" opacity="0.85"/>
<ellipse cx="625" cy="595" rx="7" ry="1.8" transform="rotate(-60 625 595)" fill="#aad3df" opacity="0.85"/>
<ellipse cx="643" cy="635" rx="4" ry="2" transform="rotate(0 643 635)" fill="#aad3df" opacity="0.85"/>
<ellipse cx="600" cy="525" rx="3" ry="1.5" transform="rotate(0 600 525)" fill="#aad3df" opacity="0.85"/>
<ellipse cx="650" cy="555" rx="3" ry="1.5" transform="rotate(-40 650 555)" fill="#aad3df" opacity="0.85"/>
<ellipse cx="615" cy="612" rx="3" ry="1.2" transform="rotate(-30 615 612)" fill="#aad3df" opacity="0.85"/>
<ellipse cx="226" cy="738" rx="2.5" ry="4.5" transform="rotate(-20 226 738)" fill="#aad3df"/>
<circle cx="674" cy="585.6" r="3.6" fill="none" stroke="#aad3df" stroke-width="1.3"/>
<path d="M60.0,505.0 L70.0,520.0 L80.0,540.0 L85.0,560.0" fill="none" stroke="#aad3df" stroke-width="0.8" opacity="0.4"/>
<path d="M95.0,520.0 L105.0,540.0 L110.0,560.0" fill="none" stroke="#aad3df" stroke-width="0.8" opacity="0.4"/>
<path d="M30.0,505.0 L36.0,520.0 L40.0,530.0" fill="none" stroke="#aad3df" stroke-width="0.8" opacity="0.4"/>
<path d="M75.0,575.0 L90.0,585.0 L100.0,600.0" fill="none" stroke="#aad3df" stroke-width="0.8" opacity="0.4"/>
<path d="M115.0,540.0 L125.0,560.0 L132.0,580.0" fill="none" stroke="#aad3df" stroke-width="0.8" opacity="0.4"/>
<rect x="224.8" y="500" width="1.5" height="362" fill="#ffffff" opacity="0.95"/>
<rect x="454.8" y="500" width="1.5" height="362" fill="#ffffff" opacity="0.95"/>
<rect x="685" y="500" width="2" height="362" fill="#ccf7ff" opacity="0.95"/>
<rect x="9" y="509.5" width="691" height="1" fill="#ffffff" opacity="0.25"/>
<rect x="9" y="741" width="691" height="1" fill="#ffffff" opacity="0.2"/>
<rect x="9" y="861" width="691" height="1" fill="#d8f0f5" opacity="0.8"/>
<text x="585.5" y="673.2" font-family="Liberation Sans" font-size="10.3" fill="#555" stroke="#fff" stroke-width="2.2" stroke-opacity="0.8" paint-order="stroke">Ottawa</text>
<text x="546.5" y="700" font-family="Liberation Sans" font-size="10.3" fill="#555" stroke="#fff" stroke-width="2.2" stroke-opacity="0.8" paint-order="stroke">Toronto</text>
<text x="597.5" y="755.2" font-family="Liberation Sans" font-size="10.3" fill="#555" stroke="#fff" stroke-width="2.2" stroke-opacity="0.8" paint-order="stroke">New York</text>
<text x="566" y="782" font-family="Liberation Sans" font-size="10.3" fill="#555" stroke="#fff" stroke-width="2.2" stroke-opacity="0.8" paint-order="stroke">Washington</text>
<text x="139" y="842" font-family="Liberation Sans" font-size="10.3" fill="#555" stroke="#fff" stroke-width="2.2" stroke-opacity="0.8" paint-order="stroke">Los Angeles</text>
<text x="211.5" y="834.7" font-family="Liberation Sans" font-size="10.3" fill="#555" stroke="#fff" stroke-width="2.2" stroke-opacity="0.8" paint-order="stroke">Phoenix</text>
<circle cx="229.3" cy="837.7" r="1.6" fill="none" stroke="#888" stroke-width="0.7"/>
<text x="329.5" y="800" font-family="Liberation Sans" font-size="11.2" fill="#8e7b9c" stroke="#fff" stroke-width="2.2" stroke-opacity="0.8" paint-order="stroke">United States</text>
<g filter="url(#blur)"><ellipse cx="139.9" cy="614.1" rx="12" ry="4.8" transform="rotate(-48 139.9 614.1)" fill="#000" opacity="0.38"/><ellipse cx="223.9" cy="623.9" rx="12" ry="4.8" transform="rotate(-48 223.9 623.9)" fill="#000" opacity="0.38"/><ellipse cx="141.3" cy="630.5" rx="12" ry="4.8" transform="rotate(-48 141.3 630.5)" fill="#000" opacity="0.38"/><ellipse cx="134.7" cy="644.9" rx="12" ry="4.8" transform="rotate(-48 134.7 644.9)" fill="#000" opacity="0.38"/><ellipse cx="282.1" cy="652.1" rx="12" ry="4.8" transform="rotate(-48 282.1 652.1)" fill="#000" opacity="0.38"/><ellipse cx="338.0" cy="652.1" rx="12" ry="4.8" transform="rotate(-48 338.0 652.1)" fill="#000" opacity="0.38"/><ellipse cx="282.5" cy="652.5" rx="12" ry="4.8" transform="rotate(-48 282.5 652.5)" fill="#000" opacity="0.38"/><ellipse cx="253.3" cy="663.6" rx="12" ry="4.8" transform="rotate(-48 253.3 663.6)" fill="#000" opacity="0.38"/><ellipse cx="681.4" cy="669.6" rx="12" ry="4.8" transform="rotate(-48 681.4 669.6)" fill="#000" opacity="0.38"/><ellipse cx="651.2" cy="676.7" rx="12" ry="4.8" transform="rotate(-48 651.2 676.7)" fill="#000" opacity="0.38"/><ellipse cx="672.9" cy="679.0" rx="12" ry="4.8" transform="rotate(-48 672.9 679.0)" fill="#000" opacity="0.38"/><ellipse cx="492.1" cy="685.4" rx="12" ry="4.8" transform="rotate(-48 492.1 685.4)" fill="#000" opacity="0.38"/><ellipse cx="541.6" cy="690.1" rx="12" ry="4.8" transform="rotate(-48 541.6 690.1)" fill="#000" opacity="0.38"/><ellipse cx="486.3" cy="698.7" rx="12" ry="4.8" transform="rotate(-48 486.3 698.7)" fill="#000" opacity="0.38"/><ellipse cx="490.4" cy="698.7" rx="12" ry="4.8" transform="rotate(-48 490.4 698.7)" fill="#000" opacity="0.38"/><ellipse cx="121.1" cy="701.6" rx="12" ry="4.8" transform="rotate(-48 121.1 701.6)" fill="#000" opacity="0.38"/><ellipse cx="601.7" cy="701.9" rx="12" ry="4.8" transform="rotate(-48 601.7 701.9)" fill="#000" opacity="0.38"/><ellipse cx="515.3" cy="702.9" rx="12" ry="4.8" transform="rotate(-48 515.3 702.9)" fill="#000" opacity="0.38"/><ellipse cx="617.0" cy="703.8" rx="12" ry="4.8" transform="rotate(-48 617.0 703.8)" fill="#000" opacity="0.38"/><ellipse cx="450.5" cy="708.0" rx="12" ry="4.8" transform="rotate(-48 450.5 708.0)" fill="#000" opacity="0.38"/><ellipse cx="585.7" cy="709.7" rx="12" ry="4.8" transform="rotate(-48 585.7 709.7)" fill="#000" opacity="0.38"/><ellipse cx="481.6" cy="710.3" rx="12" ry="4.8" transform="rotate(-48 481.6 710.3)" fill="#000" opacity="0.38"/><ellipse cx="636.2" cy="711.0" rx="12" ry="4.8" transform="rotate(-48 636.2 711.0)" fill="#000" opacity="0.38"/><ellipse cx="490.9" cy="711.5" rx="12" ry="4.8" transform="rotate(-48 490.9 711.5)" fill="#000" opacity="0.38"/><ellipse cx="541.0" cy="713.5" rx="12" ry="4.8" transform="rotate(-48 541.0 713.5)" fill="#000" opacity="0.38"/><ellipse cx="535.0" cy="714.5" rx="12" ry="4.8" transform="rotate(-48 535.0 714.5)" fill="#000" opacity="0.38"/><ellipse cx="614.5" cy="716.5" rx="12" ry="4.8" transform="rotate(-48 614.5 716.5)" fill="#000" opacity="0.38"/><ellipse cx="528.6" cy="718.9" rx="12" ry="4.8" transform="rotate(-48 528.6 718.9)" fill="#000" opacity="0.38"/><ellipse cx="616.4" cy="720.4" rx="12" ry="4.8" transform="rotate(-48 616.4 720.4)" fill="#000" opacity="0.38"/><ellipse cx="636.2" cy="721.3" rx="12" ry="4.8" transform="rotate(-48 636.2 721.3)" fill="#000" opacity="0.38"/><ellipse cx="407.0" cy="725.5" rx="12" ry="4.8" transform="rotate(-48 407.0 725.5)" fill="#000" opacity="0.38"/><ellipse cx="583.1" cy="728.9" rx="12" ry="4.8" transform="rotate(-48 583.1 728.9)" fill="#000" opacity="0.38"/><ellipse cx="609.8" cy="729.8" rx="12" ry="4.8" transform="rotate(-48 609.8 729.8)" fill="#000" opacity="0.38"/><ellipse cx="403.6" cy="732.5" rx="12" ry="4.8" transform="rotate(-48 403.6 732.5)" fill="#000" opacity="0.38"/><ellipse cx="629.6" cy="733.5" rx="12" ry="4.8" transform="rotate(-48 629.6 733.5)" fill="#000" opacity="0.38"/><ellipse cx="640.9" cy="733.5" rx="12" ry="4.8" transform="rotate(-48 640.9 733.5)" fill="#000" opacity="0.38"/><ellipse cx="492.8" cy="734.0" rx="12" ry="4.8" transform="rotate(-48 492.8 734.0)" fill="#000" opacity="0.38"/><ellipse cx="569.4" cy="737.3" rx="12" ry="4.8" transform="rotate(-48 569.4 737.3)" fill="#000" opacity="0.38"/><ellipse cx="608.9" cy="739.2" rx="12" ry="4.8" transform="rotate(-48 608.9 739.2)" fill="#000" opacity="0.38"/><ellipse cx="507.0" cy="739.5" rx="12" ry="4.8" transform="rotate(-48 507.0 739.5)" fill="#000" opacity="0.38"/><ellipse cx="513.7" cy="742.4" rx="12" ry="4.8" transform="rotate(-48 513.7 742.4)" fill="#000" opacity="0.38"/><ellipse cx="571.8" cy="743.9" rx="12" ry="4.8" transform="rotate(-48 571.8 743.9)" fill="#000" opacity="0.38"/><ellipse cx="618.9" cy="745.2" rx="12" ry="4.8" transform="rotate(-48 618.9 745.2)" fill="#000" opacity="0.38"/><ellipse cx="470.3" cy="746.0" rx="12" ry="4.8" transform="rotate(-48 470.3 746.0)" fill="#000" opacity="0.38"/><ellipse cx="528.8" cy="746.8" rx="12" ry="4.8" transform="rotate(-48 528.8 746.8)" fill="#000" opacity="0.38"/><ellipse cx="599.5" cy="748.5" rx="12" ry="4.8" transform="rotate(-48 599.5 748.5)" fill="#000" opacity="0.38"/><ellipse cx="314.6" cy="749.6" rx="12" ry="4.8" transform="rotate(-48 314.6 749.6)" fill="#000" opacity="0.38"/><ellipse cx="497.4" cy="752.2" rx="12" ry="4.8" transform="rotate(-48 497.4 752.2)" fill="#000" opacity="0.38"/><ellipse cx="600.0" cy="759.5" rx="12" ry="4.8" transform="rotate(-48 600.0 759.5)" fill="#000" opacity="0.38"/><ellipse cx="617.0" cy="762.2" rx="12" ry="4.8" transform="rotate(-48 617.0 762.2)" fill="#000" opacity="0.38"/><ellipse cx="517.7" cy="763.8" rx="12" ry="4.8" transform="rotate(-48 517.7 763.8)" fill="#000" opacity="0.38"/><ellipse cx="533.5" cy="768.5" rx="12" ry="4.8" transform="rotate(-48 533.5 768.5)" fill="#000" opacity="0.38"/><ellipse cx="432.7" cy="773.9" rx="12" ry="4.8" transform="rotate(-48 432.7 773.9)" fill="#000" opacity="0.38"/><ellipse cx="561.8" cy="778.4" rx="12" ry="4.8" transform="rotate(-48 561.8 778.4)" fill="#000" opacity="0.38"/><ellipse cx="610.4" cy="784.4" rx="12" ry="4.8" transform="rotate(-48 610.4 784.4)" fill="#000" opacity="0.38"/><ellipse cx="576.9" cy="786.3" rx="12" ry="4.8" transform="rotate(-48 576.9 786.3)" fill="#000" opacity="0.38"/><ellipse cx="389.3" cy="787.4" rx="12" ry="4.8" transform="rotate(-48 389.3 787.4)" fill="#000" opacity="0.38"/><ellipse cx="442.2" cy="788.0" rx="12" ry="4.8" transform="rotate(-48 442.2 788.0)" fill="#000" opacity="0.38"/><ellipse cx="576.8" cy="791.9" rx="12" ry="4.8" transform="rotate(-48 576.8 791.9)" fill="#000" opacity="0.38"/><ellipse cx="426.4" cy="792.8" rx="12" ry="4.8" transform="rotate(-48 426.4 792.8)" fill="#000" opacity="0.38"/><ellipse cx="583.5" cy="792.9" rx="12" ry="4.8" transform="rotate(-48 583.5 792.9)" fill="#000" opacity="0.38"/><ellipse cx="264.2" cy="795.7" rx="12" ry="4.8" transform="rotate(-48 264.2 795.7)" fill="#000" opacity="0.38"/><ellipse cx="583.7" cy="795.8" rx="12" ry="4.8" transform="rotate(-48 583.7 795.8)" fill="#000" opacity="0.38"/><ellipse cx="587.5" cy="798.0" rx="12" ry="4.8" transform="rotate(-48 587.5 798.0)" fill="#000" opacity="0.38"/><ellipse cx="182.2" cy="799.4" rx="12" ry="4.8" transform="rotate(-48 182.2 799.4)" fill="#000" opacity="0.38"/><ellipse cx="499.1" cy="800.9" rx="12" ry="4.8" transform="rotate(-48 499.1 800.9)" fill="#000" opacity="0.38"/><ellipse cx="301.1" cy="804.3" rx="12" ry="4.8" transform="rotate(-48 301.1 804.3)" fill="#000" opacity="0.38"/><ellipse cx="155.4" cy="805.2" rx="12" ry="4.8" transform="rotate(-48 155.4 805.2)" fill="#000" opacity="0.38"/><ellipse cx="563.4" cy="805.3" rx="12" ry="4.8" transform="rotate(-48 563.4 805.3)" fill="#000" opacity="0.38"/><ellipse cx="469.2" cy="806.2" rx="12" ry="4.8" transform="rotate(-48 469.2 806.2)" fill="#000" opacity="0.38"/><ellipse cx="505.6" cy="811.3" rx="12" ry="4.8" transform="rotate(-48 505.6 811.3)" fill="#000" opacity="0.38"/><ellipse cx="183.6" cy="812.4" rx="12" ry="4.8" transform="rotate(-48 183.6 812.4)" fill="#000" opacity="0.38"/><ellipse cx="437.2" cy="821.8" rx="12" ry="4.8" transform="rotate(-48 437.2 821.8)" fill="#000" opacity="0.38"/><ellipse cx="179.6" cy="823.3" rx="12" ry="4.8" transform="rotate(-48 179.6 823.3)" fill="#000" opacity="0.38"/><ellipse cx="456.6" cy="823.3" rx="12" ry="4.8" transform="rotate(-48 456.6 823.3)" fill="#000" opacity="0.38"/><ellipse cx="503.5" cy="826.3" rx="12" ry="4.8" transform="rotate(-48 503.5 826.3)" fill="#000" opacity="0.38"/><ellipse cx="555.3" cy="827.8" rx="12" ry="4.8" transform="rotate(-48 555.3 827.8)" fill="#000" opacity="0.38"/><ellipse cx="495.5" cy="830.8" rx="12" ry="4.8" transform="rotate(-48 495.5 830.8)" fill="#000" opacity="0.38"/><ellipse cx="573.8" cy="835.8" rx="12" ry="4.8" transform="rotate(-48 573.8 835.8)" fill="#000" opacity="0.38"/><ellipse cx="192.3" cy="836.9" rx="12" ry="4.8" transform="rotate(-48 192.3 836.9)" fill="#000" opacity="0.38"/><ellipse cx="399.5" cy="845.7" rx="12" ry="4.8" transform="rotate(-48 399.5 845.7)" fill="#000" opacity="0.38"/><ellipse cx="345.4" cy="845.8" rx="12" ry="4.8" transform="rotate(-48 345.4 845.8)" fill="#000" opacity="0.38"/><ellipse cx="535.8" cy="847.8" rx="12" ry="4.8" transform="rotate(-48 535.8 847.8)" fill="#000" opacity="0.38"/><ellipse cx="467.7" cy="849.6" rx="12" ry="4.8" transform="rotate(-48 467.7 849.6)" fill="#000" opacity="0.38"/><ellipse cx="439.8" cy="859.2" rx="12" ry="4.8" transform="rotate(-48 439.8 859.2)" fill="#000" opacity="0.38"/><ellipse cx="455.1" cy="859.2" rx="12" ry="4.8" transform="rotate(-48 455.1 859.2)" fill="#000" opacity="0.38"/><ellipse cx="404.9" cy="861.5" rx="12" ry="4.8" transform="rotate(-48 404.9 861.5)" fill="#000" opacity="0.38"/><ellipse cx="540.3" cy="865.7" rx="12" ry="4.8" transform="rotate(-48 540.3 865.7)" fill="#000" opacity="0.38"/><ellipse cx="513.4" cy="867.5" rx="12" ry="4.8" transform="rotate(-48 513.4 867.5)" fill="#000" opacity="0.38"/><ellipse cx="466.8" cy="869.0" rx="12" ry="4.8" transform="rotate(-48 466.8 869.0)" fill="#000" opacity="0.38"/><ellipse cx="413.8" cy="870.5" rx="12" ry="4.8" transform="rotate(-48 413.8 870.5)" fill="#000" opacity="0.38"/><ellipse cx="555.3" cy="870.5" rx="12" ry="4.8" transform="rotate(-48 555.3 870.5)" fill="#000" opacity="0.38"/></g>
<use href="#pin" x="126.9" y="599.6"/><use href="#pin" x="210.9" y="609.4"/><use href="#pin" x="128.3" y="616.0"/><use href="#pin" x="121.7" y="630.4"/><use href="#pin" x="269.1" y="637.6"/><use href="#pin" x="325.0" y="637.6"/><use href="#pin" x="269.5" y="638.0"/><use href="#pin" x="240.3" y="649.1"/><use href="#pin" x="668.4" y="655.1"/><use href="#pin" x="638.2" y="662.2"/><use href="#pin" x="659.9" y="664.5"/><use href="#pin" x="479.1" y="670.9"/><use href="#pin" x="528.6" y="675.6"/><use href="#pin" x="473.3" y="684.2"/><use href="#pin" x="477.4" y="684.2"/><use href="#pin" x="108.1" y="687.1"/><use href="#pin" x="588.7" y="687.4"/><use href="#pin" x="502.3" y="688.4"/><use href="#pin" x="604.0" y="689.3"/><use href="#pin" x="437.5" y="693.5"/><use href="#pin" x="572.7" y="695.2"/><use href="#pin" x="468.6" y="695.8"/><use href="#pin" x="623.2" y="696.5"/><use href="#pin" x="477.9" y="697.0"/><use href="#pin" x="528.0" y="699.0"/><use href="#pin" x="522.0" y="700.0"/><use href="#pin" x="601.5" y="702.0"/><use href="#pin" x="515.6" y="704.4"/><use href="#pin" x="603.4" y="705.9"/><use href="#pin" x="623.2" y="706.8"/><use href="#pin" x="394.0" y="711.0"/><use href="#pin" x="570.1" y="714.4"/><use href="#pin" x="596.8" y="715.3"/><use href="#pin" x="390.6" y="718.0"/><use href="#pin" x="616.6" y="719.0"/><use href="#pin" x="627.9" y="719.0"/><use href="#pin" x="479.8" y="719.5"/><use href="#pin" x="556.4" y="722.8"/><use href="#pin" x="595.9" y="724.7"/><use href="#pin" x="494.0" y="725.0"/><use href="#pin" x="500.7" y="727.9"/><use href="#pin" x="558.8" y="729.4"/><use href="#pin" x="605.9" y="730.7"/><use href="#pin" x="457.3" y="731.5"/><use href="#pin" x="515.8" y="732.3"/><use href="#pin" x="586.5" y="734.0"/><use href="#pin" x="301.6" y="735.1"/><use href="#pin" x="484.4" y="737.7"/><use href="#pin" x="587.0" y="745.0"/><use href="#pin" x="604.0" y="747.7"/><use href="#pin" x="504.7" y="749.3"/><use href="#pin" x="520.5" y="754.0"/><use href="#pin" x="419.7" y="759.4"/><use href="#pin" x="548.8" y="763.9"/><use href="#pin" x="597.4" y="769.9"/><use href="#pin" x="563.9" y="771.8"/><use href="#pin" x="376.3" y="772.9"/><use href="#pin" x="429.2" y="773.5"/><use href="#pin" x="563.8" y="777.4"/><use href="#pin" x="413.4" y="778.3"/><use href="#pin" x="570.5" y="778.4"/><use href="#pin" x="251.2" y="781.2"/><use href="#pin" x="570.7" y="781.3"/><use href="#pin" x="574.5" y="783.5"/><use href="#pin" x="169.2" y="784.9"/><use href="#pin" x="486.1" y="786.4"/><use href="#pin" x="288.1" y="789.8"/><use href="#pin" x="142.4" y="790.7"/><use href="#pin" x="550.4" y="790.8"/><use href="#pin" x="456.2" y="791.7"/><use href="#pin" x="492.6" y="796.8"/><use href="#pin" x="170.6" y="797.9"/><use href="#pin" x="424.2" y="807.3"/><use href="#pin" x="166.6" y="808.8"/><use href="#pin" x="443.6" y="808.8"/><use href="#pin" x="490.5" y="811.8"/><use href="#pin" x="542.3" y="813.3"/><use href="#pin" x="482.5" y="816.3"/><use href="#pin" x="560.8" y="821.3"/><use href="#pin" x="179.3" y="822.4"/><use href="#pin" x="386.5" y="831.2"/><use href="#pin" x="332.4" y="831.3"/><use href="#pin" x="522.8" y="833.3"/><use href="#pin" x="454.7" y="835.1"/><use href="#pin" x="426.8" y="844.7"/><use href="#pin" x="442.1" y="844.7"/><use href="#pin" x="391.9" y="847.0"/><use href="#pin" x="527.3" y="851.2"/><use href="#pin" x="500.4" y="853.0"/><use href="#pin" x="453.8" y="854.5"/><use href="#pin" x="400.8" y="856.0"/><use href="#pin" x="542.3" y="856.0"/>
<!-- zoom control -->
<rect x="18.5" y="509.5" width="28" height="55" rx="4" fill="none" stroke="#777" stroke-opacity="0.75" stroke-width="1"/>
<line x1="18.5" y1="536.5" x2="46.5" y2="536.5" stroke="#888" stroke-opacity="0.5"/>
<path d="M28 524 H38 M33 519 V529" stroke="#2a7fc4" stroke-width="2.2"/>
<path d="M28 551 H38" stroke="#2a7fc4" stroke-width="2.2"/>
<!-- popup -->
<g filter="url(#pshadow)">
<path d="M128.6,497 H293.3 A12,12 0 0 1 305.3,509 V580 A12,12 0 0 1 293.3,592 H219.6 L211.4,600.2 L203.2,592 H128.6 A12,12 0 0 1 116.6,580 V509 A12,12 0 0 1 128.6,497 Z" fill="#fff"/>
</g>
</g>
</svg>
<svg class="abs" style="left:134px;top:515px" width="10" height="10" viewBox="0 0 10 10"><circle cx="5" cy="2.6" r="2.5" fill="#333"/><path d="M0.6 9.8 V7.6 C0.6 5.8 2 5.2 3 5.2 L5 6.2 L7 5.2 C8 5.2 9.4 5.8 9.4 7.6 V9.8 Z" fill="#333"/></svg><div class="t" style="left:146.8px;top:515px;font-size:12px;font-weight:bold;color:#333;letter-spacing:-0.165px;">blackwelle@sample.info</div><div class="abs" style="left:135px;top:545px;width:148px;height:2px;background:#dedede"></div><div class="t" style="left:135px;top:567px;font-size:12px;font-weight:normal;color:#333;letter-spacing:-0.120px;">Individual</div><svg class="abs" style="left:290px;top:505px" width="9" height="9" viewBox="0 0 9 9"><path d="M1 1 L8 8 M8 1 L1 8" stroke="#2f86c9" stroke-width="1.3"/></svg>
<div class="abs" style="left:0;top:862px;width:903px;height:2px;background:#000"></div>
</body></html>
